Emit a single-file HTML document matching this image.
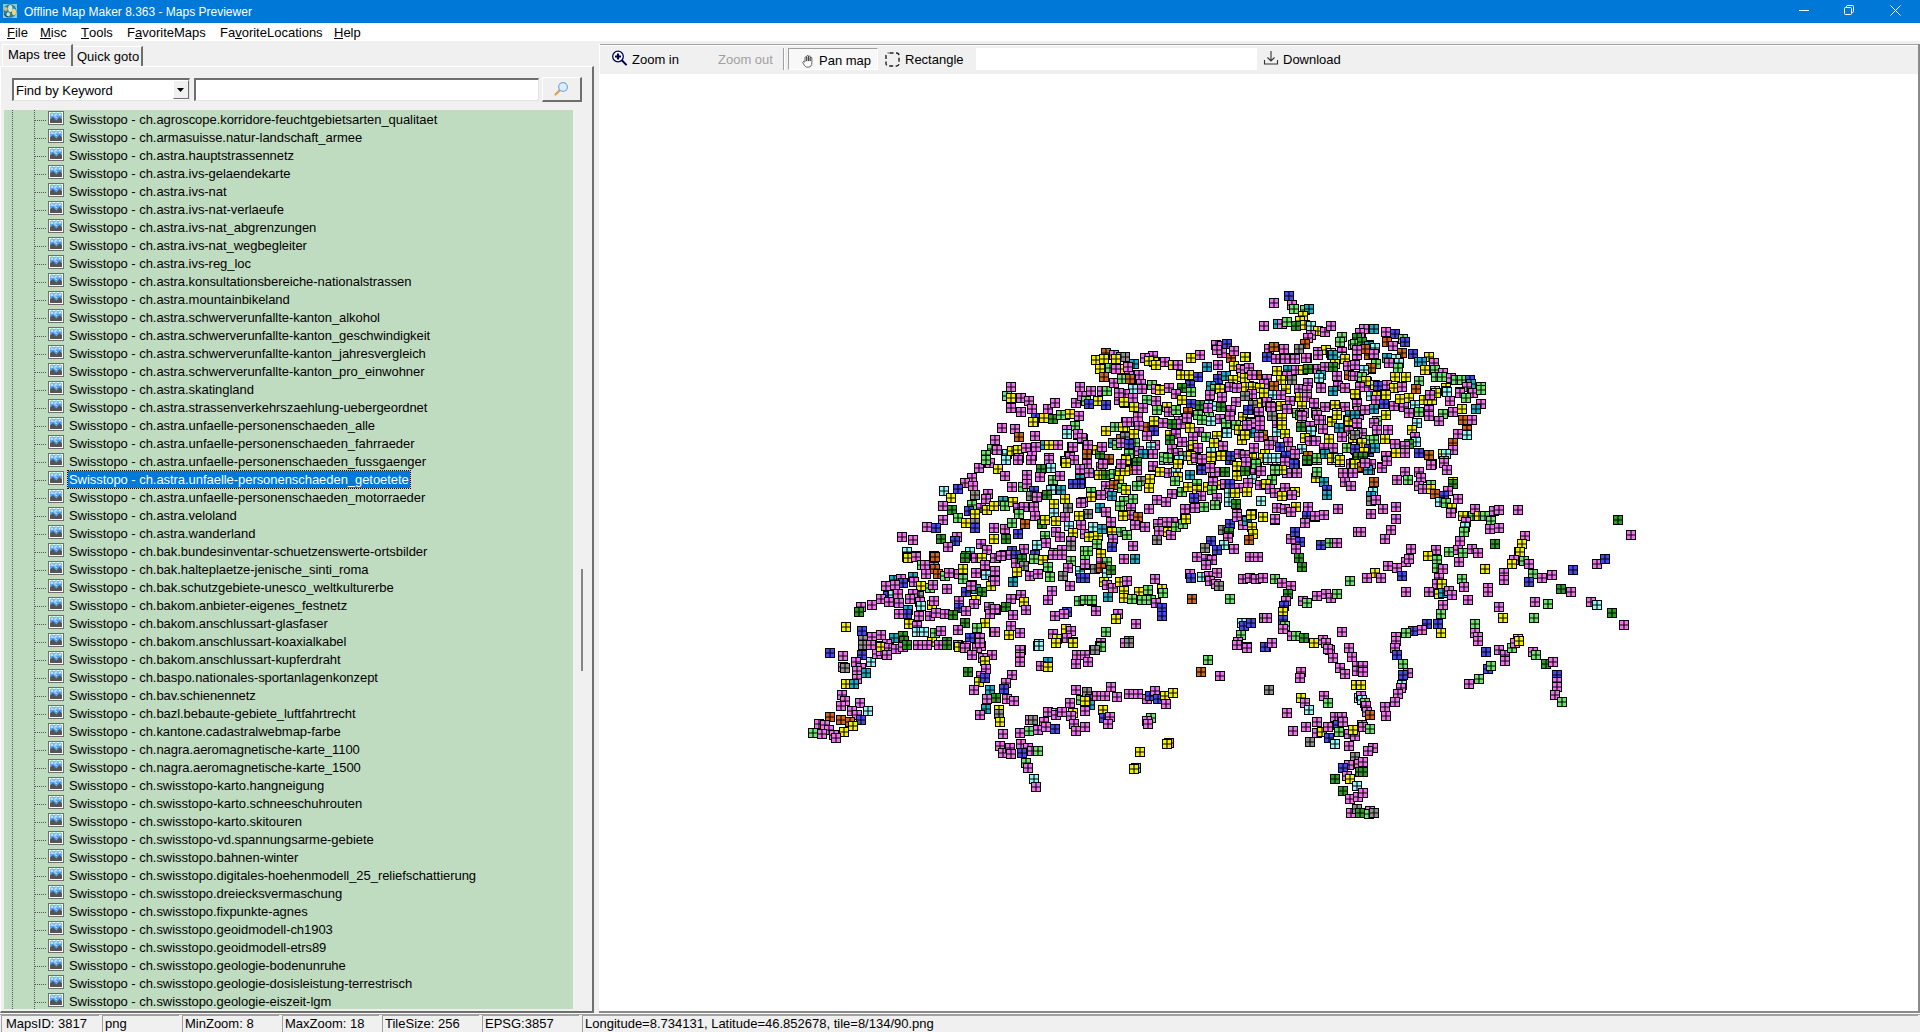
<!DOCTYPE html>
<html><head><meta charset="utf-8"><style>
*{margin:0;padding:0;box-sizing:border-box}
html,body{width:1920px;height:1032px;overflow:hidden;background:#f0f0f0;font-family:"Liberation Sans",sans-serif;font-size:13px;color:#000}
.abs{position:absolute}
#title{position:absolute;left:0;top:0;width:1920px;height:23px;background:#0078d7;color:#fff;font-size:12px}
#title .t{position:absolute;left:24px;top:5px;white-space:nowrap}
#menu{position:absolute;left:0;top:23px;width:1920px;height:18px;background:#fff}
#menu span{position:absolute;top:2px;white-space:nowrap}
u{text-decoration:none;border-bottom:1px solid #000;display:inline-block;line-height:11px}
.tree{position:absolute;left:4px;top:110px;width:569px;height:899px;background:#c0dcc0;overflow:hidden}
.row{position:absolute;left:-4px;width:600px;height:18px}
.hd{position:absolute;left:35px;top:10px;width:12px;height:1px;background:repeating-linear-gradient(90deg,#555 0 1px,transparent 1px 2px)}
.lbl{position:absolute;left:69px;top:1px;white-space:nowrap;line-height:16px;padding:1px 0 0 0;letter-spacing:-0.05px}
.sel{background:#0078d7;color:#fff;outline:1px dotted #000;left:68px;padding-left:1px;padding-right:1px}
.vd{position:absolute;top:0;width:1px;height:901px;background:repeating-linear-gradient(180deg,#555 0 1px,transparent 1px 2px)}
.sb span{position:absolute;top:0;height:17px;border-left:1px solid #a0a0a0;border-top:1px solid #a0a0a0;white-space:nowrap;padding-left:2px;line-height:16px}
.tb{position:absolute;top:52px;white-space:nowrap}
</style></head><body>
<div id="title"><svg class="abs" style="left:3px;top:4px" width="14" height="14" viewBox="0 0 14 14"><rect width="14" height="14" fill="#84cdea"/><ellipse cx="7" cy="7" rx="6.5" ry="6.8" fill="#2f7f9a"/><ellipse cx="7.3" cy="4.5" rx="2.2" ry="3.5" fill="#cfe6d8"/><ellipse cx="2.8" cy="5" rx="1.9" ry="2" fill="#e9b66a"/><ellipse cx="11" cy="8" rx="2" ry="3.2" fill="#f2d577"/><ellipse cx="5.3" cy="10.3" rx="1.7" ry="2" fill="#dfe3a6"/><path d="M1 10 Q3 13 5 13" stroke="#1d4c5c" stroke-width="1.2" fill="none"/></svg><span class="t">Offline Map Maker 8.363 - Maps Previewer</span>
<svg class="abs" style="left:1799px;top:10px" width="11" height="2"><rect width="10" height="1" fill="#fff"/></svg>
<svg class="abs" style="left:1844px;top:5px" width="11" height="11" viewBox="0 0 11 11"><rect x="0.5" y="2.5" width="7" height="7" rx="1" fill="none" stroke="#fff"/><path d="M2.5 2.5 V1.5 a1 1 0 0 1 1 -1 H8.5 a1 1 0 0 1 1 1 V6.5 a1 1 0 0 1 -1 1 H7.5" fill="none" stroke="#fff"/></svg>
<svg class="abs" style="left:1890px;top:5px" width="12" height="12" viewBox="0 0 12 12"><path d="M0.5 0.5 L10.5 10.5 M10.5 0.5 L0.5 10.5" stroke="#fff" stroke-width="1"/></svg>
</div>
<div id="menu">
<span style="left:7px"><u>F</u>ile</span>
<span style="left:40px"><u>M</u>isc</span>
<span style="left:81px"><u>T</u>ools</span>
<span style="left:127px">F<u>a</u>voriteMaps</span>
<span style="left:220px">Fa<u>v</u>oriteLocations</span>
<span style="left:334px"><u>H</u>elp</span>
</div>

<!-- left panel -->
<div class="abs" style="left:0;top:42px;width:600px;height:972px;background:#f0f0f0"></div>
<!-- tabs -->
<div class="abs" style="left:2px;top:44px;width:71px;height:23px;background:#f0f0f0;border-top:1px solid #fff;border-left:1px solid #fff;border-right:2px solid #6e6e6e"></div>
<span class="abs" style="left:8px;top:47px;white-space:nowrap">Maps tree</span>
<div class="abs" style="left:73px;top:46px;width:70px;height:21px;border-top:1px solid #fff;border-right:2px solid #6e6e6e"></div>
<span class="abs" style="left:77px;top:49px;white-space:nowrap">Quick goto</span>
<!-- panel frame -->
<div class="abs" style="left:0px;top:66px;width:594px;height:947px;border-left:1px solid #fff;border-top:1px solid #fff;border-right:2px solid #6e6e6e;border-bottom:2px solid #6e6e6e"></div>
<!-- combobox -->
<div class="abs" style="left:12px;top:78px;width:178px;height:23px;background:#fff;border-top:2px solid #6e6e6e;border-left:2px solid #6e6e6e;border-bottom:1px solid #e3e3e3;border-right:1px solid #e3e3e3"></div>
<span class="abs" style="left:16px;top:83px;white-space:nowrap">Find by Keyword</span>
<div class="abs" style="left:173px;top:80px;width:16px;height:19px;background:#f0f0f0;border-right:1px solid #6e6e6e;border-bottom:1px solid #6e6e6e;border-top:1px solid #fff;border-left:1px solid #fff"></div>
<svg class="abs" style="left:177px;top:88px" width="8" height="5"><path d="M0 0 H7 L3.5 4Z" fill="#000"/></svg>
<!-- text field -->
<div class="abs" style="left:194px;top:78px;width:345px;height:23px;background:#fff;border-top:2px solid #6e6e6e;border-left:2px solid #6e6e6e;border-bottom:1px solid #e3e3e3;border-right:1px solid #e3e3e3"></div>
<!-- search button -->
<div class="abs" style="left:542px;top:77px;width:40px;height:25px;background:#f0f0f0;border-top:1px solid #fff;border-left:1px solid #fff;border-right:2px solid #6e6e6e;border-bottom:2px solid #6e6e6e"></div>
<svg class="abs" style="left:553px;top:81px" width="16" height="16" viewBox="0 0 16 16"><path d="M7 9 L2.5 13.5" stroke="#e0a060" stroke-width="2.4" stroke-linecap="round"/><circle cx="10" cy="6" r="4.4" fill="#d6f0ff" stroke="#86a8d4" stroke-width="1.3"/></svg>

<!-- tree -->
<div class="tree">
<div class="vd" style="left:8px"></div>
<div class="vd" style="left:30px"></div>
<div class="row" style="top:0px"><svg width="16" height="14" viewBox="0 0 16 14" style="position:absolute;left:48px;top:1px"><rect x="0.5" y="0.5" width="15" height="13" fill="#fff" stroke="#6e6e6e"/><rect x="2" y="2" width="12" height="10" fill="#5aa2e6"/><rect x="2" y="2" width="12" height="3" fill="#7dbcf0"/><path d="M2 12 L2 8.5 L5 6 L8.5 9.5 L11.5 6 L14 8.5 L14 12 Z" fill="#555"/><rect x="3" y="1" width="2" height="1" fill="#9ee"/><rect x="7" y="1" width="2" height="1" fill="#9ee"/><rect x="11" y="1" width="2" height="1" fill="#9ee"/><path d="M9 3.3 a1.6 1.6 0 1 0 0 3" stroke="#e8f6ff" fill="none" stroke-width="0.9"/><path d="M4 3 V5 M3 4 H5 M12 2.5 V4.5 M11 3.5 H13" stroke="#e8f6ff" stroke-width="0.7"/></svg><div class="hd"></div><span class="lbl">Swisstopo - ch.agroscope.korridore-feuchtgebietsarten_qualitaet</span></div>
<div class="row" style="top:18px"><svg width="16" height="14" viewBox="0 0 16 14" style="position:absolute;left:48px;top:1px"><rect x="0.5" y="0.5" width="15" height="13" fill="#fff" stroke="#6e6e6e"/><rect x="2" y="2" width="12" height="10" fill="#5aa2e6"/><rect x="2" y="2" width="12" height="3" fill="#7dbcf0"/><path d="M2 12 L2 8.5 L5 6 L8.5 9.5 L11.5 6 L14 8.5 L14 12 Z" fill="#555"/><rect x="3" y="1" width="2" height="1" fill="#9ee"/><rect x="7" y="1" width="2" height="1" fill="#9ee"/><rect x="11" y="1" width="2" height="1" fill="#9ee"/><path d="M9 3.3 a1.6 1.6 0 1 0 0 3" stroke="#e8f6ff" fill="none" stroke-width="0.9"/><path d="M4 3 V5 M3 4 H5 M12 2.5 V4.5 M11 3.5 H13" stroke="#e8f6ff" stroke-width="0.7"/></svg><div class="hd"></div><span class="lbl">Swisstopo - ch.armasuisse.natur-landschaft_armee</span></div>
<div class="row" style="top:36px"><svg width="16" height="14" viewBox="0 0 16 14" style="position:absolute;left:48px;top:1px"><rect x="0.5" y="0.5" width="15" height="13" fill="#fff" stroke="#6e6e6e"/><rect x="2" y="2" width="12" height="10" fill="#5aa2e6"/><rect x="2" y="2" width="12" height="3" fill="#7dbcf0"/><path d="M2 12 L2 8.5 L5 6 L8.5 9.5 L11.5 6 L14 8.5 L14 12 Z" fill="#555"/><rect x="3" y="1" width="2" height="1" fill="#9ee"/><rect x="7" y="1" width="2" height="1" fill="#9ee"/><rect x="11" y="1" width="2" height="1" fill="#9ee"/><path d="M9 3.3 a1.6 1.6 0 1 0 0 3" stroke="#e8f6ff" fill="none" stroke-width="0.9"/><path d="M4 3 V5 M3 4 H5 M12 2.5 V4.5 M11 3.5 H13" stroke="#e8f6ff" stroke-width="0.7"/></svg><div class="hd"></div><span class="lbl">Swisstopo - ch.astra.hauptstrassennetz</span></div>
<div class="row" style="top:54px"><svg width="16" height="14" viewBox="0 0 16 14" style="position:absolute;left:48px;top:1px"><rect x="0.5" y="0.5" width="15" height="13" fill="#fff" stroke="#6e6e6e"/><rect x="2" y="2" width="12" height="10" fill="#5aa2e6"/><rect x="2" y="2" width="12" height="3" fill="#7dbcf0"/><path d="M2 12 L2 8.5 L5 6 L8.5 9.5 L11.5 6 L14 8.5 L14 12 Z" fill="#555"/><rect x="3" y="1" width="2" height="1" fill="#9ee"/><rect x="7" y="1" width="2" height="1" fill="#9ee"/><rect x="11" y="1" width="2" height="1" fill="#9ee"/><path d="M9 3.3 a1.6 1.6 0 1 0 0 3" stroke="#e8f6ff" fill="none" stroke-width="0.9"/><path d="M4 3 V5 M3 4 H5 M12 2.5 V4.5 M11 3.5 H13" stroke="#e8f6ff" stroke-width="0.7"/></svg><div class="hd"></div><span class="lbl">Swisstopo - ch.astra.ivs-gelaendekarte</span></div>
<div class="row" style="top:72px"><svg width="16" height="14" viewBox="0 0 16 14" style="position:absolute;left:48px;top:1px"><rect x="0.5" y="0.5" width="15" height="13" fill="#fff" stroke="#6e6e6e"/><rect x="2" y="2" width="12" height="10" fill="#5aa2e6"/><rect x="2" y="2" width="12" height="3" fill="#7dbcf0"/><path d="M2 12 L2 8.5 L5 6 L8.5 9.5 L11.5 6 L14 8.5 L14 12 Z" fill="#555"/><rect x="3" y="1" width="2" height="1" fill="#9ee"/><rect x="7" y="1" width="2" height="1" fill="#9ee"/><rect x="11" y="1" width="2" height="1" fill="#9ee"/><path d="M9 3.3 a1.6 1.6 0 1 0 0 3" stroke="#e8f6ff" fill="none" stroke-width="0.9"/><path d="M4 3 V5 M3 4 H5 M12 2.5 V4.5 M11 3.5 H13" stroke="#e8f6ff" stroke-width="0.7"/></svg><div class="hd"></div><span class="lbl">Swisstopo - ch.astra.ivs-nat</span></div>
<div class="row" style="top:90px"><svg width="16" height="14" viewBox="0 0 16 14" style="position:absolute;left:48px;top:1px"><rect x="0.5" y="0.5" width="15" height="13" fill="#fff" stroke="#6e6e6e"/><rect x="2" y="2" width="12" height="10" fill="#5aa2e6"/><rect x="2" y="2" width="12" height="3" fill="#7dbcf0"/><path d="M2 12 L2 8.5 L5 6 L8.5 9.5 L11.5 6 L14 8.5 L14 12 Z" fill="#555"/><rect x="3" y="1" width="2" height="1" fill="#9ee"/><rect x="7" y="1" width="2" height="1" fill="#9ee"/><rect x="11" y="1" width="2" height="1" fill="#9ee"/><path d="M9 3.3 a1.6 1.6 0 1 0 0 3" stroke="#e8f6ff" fill="none" stroke-width="0.9"/><path d="M4 3 V5 M3 4 H5 M12 2.5 V4.5 M11 3.5 H13" stroke="#e8f6ff" stroke-width="0.7"/></svg><div class="hd"></div><span class="lbl">Swisstopo - ch.astra.ivs-nat-verlaeufe</span></div>
<div class="row" style="top:108px"><svg width="16" height="14" viewBox="0 0 16 14" style="position:absolute;left:48px;top:1px"><rect x="0.5" y="0.5" width="15" height="13" fill="#fff" stroke="#6e6e6e"/><rect x="2" y="2" width="12" height="10" fill="#5aa2e6"/><rect x="2" y="2" width="12" height="3" fill="#7dbcf0"/><path d="M2 12 L2 8.5 L5 6 L8.5 9.5 L11.5 6 L14 8.5 L14 12 Z" fill="#555"/><rect x="3" y="1" width="2" height="1" fill="#9ee"/><rect x="7" y="1" width="2" height="1" fill="#9ee"/><rect x="11" y="1" width="2" height="1" fill="#9ee"/><path d="M9 3.3 a1.6 1.6 0 1 0 0 3" stroke="#e8f6ff" fill="none" stroke-width="0.9"/><path d="M4 3 V5 M3 4 H5 M12 2.5 V4.5 M11 3.5 H13" stroke="#e8f6ff" stroke-width="0.7"/></svg><div class="hd"></div><span class="lbl">Swisstopo - ch.astra.ivs-nat_abgrenzungen</span></div>
<div class="row" style="top:126px"><svg width="16" height="14" viewBox="0 0 16 14" style="position:absolute;left:48px;top:1px"><rect x="0.5" y="0.5" width="15" height="13" fill="#fff" stroke="#6e6e6e"/><rect x="2" y="2" width="12" height="10" fill="#5aa2e6"/><rect x="2" y="2" width="12" height="3" fill="#7dbcf0"/><path d="M2 12 L2 8.5 L5 6 L8.5 9.5 L11.5 6 L14 8.5 L14 12 Z" fill="#555"/><rect x="3" y="1" width="2" height="1" fill="#9ee"/><rect x="7" y="1" width="2" height="1" fill="#9ee"/><rect x="11" y="1" width="2" height="1" fill="#9ee"/><path d="M9 3.3 a1.6 1.6 0 1 0 0 3" stroke="#e8f6ff" fill="none" stroke-width="0.9"/><path d="M4 3 V5 M3 4 H5 M12 2.5 V4.5 M11 3.5 H13" stroke="#e8f6ff" stroke-width="0.7"/></svg><div class="hd"></div><span class="lbl">Swisstopo - ch.astra.ivs-nat_wegbegleiter</span></div>
<div class="row" style="top:144px"><svg width="16" height="14" viewBox="0 0 16 14" style="position:absolute;left:48px;top:1px"><rect x="0.5" y="0.5" width="15" height="13" fill="#fff" stroke="#6e6e6e"/><rect x="2" y="2" width="12" height="10" fill="#5aa2e6"/><rect x="2" y="2" width="12" height="3" fill="#7dbcf0"/><path d="M2 12 L2 8.5 L5 6 L8.5 9.5 L11.5 6 L14 8.5 L14 12 Z" fill="#555"/><rect x="3" y="1" width="2" height="1" fill="#9ee"/><rect x="7" y="1" width="2" height="1" fill="#9ee"/><rect x="11" y="1" width="2" height="1" fill="#9ee"/><path d="M9 3.3 a1.6 1.6 0 1 0 0 3" stroke="#e8f6ff" fill="none" stroke-width="0.9"/><path d="M4 3 V5 M3 4 H5 M12 2.5 V4.5 M11 3.5 H13" stroke="#e8f6ff" stroke-width="0.7"/></svg><div class="hd"></div><span class="lbl">Swisstopo - ch.astra.ivs-reg_loc</span></div>
<div class="row" style="top:162px"><svg width="16" height="14" viewBox="0 0 16 14" style="position:absolute;left:48px;top:1px"><rect x="0.5" y="0.5" width="15" height="13" fill="#fff" stroke="#6e6e6e"/><rect x="2" y="2" width="12" height="10" fill="#5aa2e6"/><rect x="2" y="2" width="12" height="3" fill="#7dbcf0"/><path d="M2 12 L2 8.5 L5 6 L8.5 9.5 L11.5 6 L14 8.5 L14 12 Z" fill="#555"/><rect x="3" y="1" width="2" height="1" fill="#9ee"/><rect x="7" y="1" width="2" height="1" fill="#9ee"/><rect x="11" y="1" width="2" height="1" fill="#9ee"/><path d="M9 3.3 a1.6 1.6 0 1 0 0 3" stroke="#e8f6ff" fill="none" stroke-width="0.9"/><path d="M4 3 V5 M3 4 H5 M12 2.5 V4.5 M11 3.5 H13" stroke="#e8f6ff" stroke-width="0.7"/></svg><div class="hd"></div><span class="lbl">Swisstopo - ch.astra.konsultationsbereiche-nationalstrassen</span></div>
<div class="row" style="top:180px"><svg width="16" height="14" viewBox="0 0 16 14" style="position:absolute;left:48px;top:1px"><rect x="0.5" y="0.5" width="15" height="13" fill="#fff" stroke="#6e6e6e"/><rect x="2" y="2" width="12" height="10" fill="#5aa2e6"/><rect x="2" y="2" width="12" height="3" fill="#7dbcf0"/><path d="M2 12 L2 8.5 L5 6 L8.5 9.5 L11.5 6 L14 8.5 L14 12 Z" fill="#555"/><rect x="3" y="1" width="2" height="1" fill="#9ee"/><rect x="7" y="1" width="2" height="1" fill="#9ee"/><rect x="11" y="1" width="2" height="1" fill="#9ee"/><path d="M9 3.3 a1.6 1.6 0 1 0 0 3" stroke="#e8f6ff" fill="none" stroke-width="0.9"/><path d="M4 3 V5 M3 4 H5 M12 2.5 V4.5 M11 3.5 H13" stroke="#e8f6ff" stroke-width="0.7"/></svg><div class="hd"></div><span class="lbl">Swisstopo - ch.astra.mountainbikeland</span></div>
<div class="row" style="top:198px"><svg width="16" height="14" viewBox="0 0 16 14" style="position:absolute;left:48px;top:1px"><rect x="0.5" y="0.5" width="15" height="13" fill="#fff" stroke="#6e6e6e"/><rect x="2" y="2" width="12" height="10" fill="#5aa2e6"/><rect x="2" y="2" width="12" height="3" fill="#7dbcf0"/><path d="M2 12 L2 8.5 L5 6 L8.5 9.5 L11.5 6 L14 8.5 L14 12 Z" fill="#555"/><rect x="3" y="1" width="2" height="1" fill="#9ee"/><rect x="7" y="1" width="2" height="1" fill="#9ee"/><rect x="11" y="1" width="2" height="1" fill="#9ee"/><path d="M9 3.3 a1.6 1.6 0 1 0 0 3" stroke="#e8f6ff" fill="none" stroke-width="0.9"/><path d="M4 3 V5 M3 4 H5 M12 2.5 V4.5 M11 3.5 H13" stroke="#e8f6ff" stroke-width="0.7"/></svg><div class="hd"></div><span class="lbl">Swisstopo - ch.astra.schwerverunfallte-kanton_alkohol</span></div>
<div class="row" style="top:216px"><svg width="16" height="14" viewBox="0 0 16 14" style="position:absolute;left:48px;top:1px"><rect x="0.5" y="0.5" width="15" height="13" fill="#fff" stroke="#6e6e6e"/><rect x="2" y="2" width="12" height="10" fill="#5aa2e6"/><rect x="2" y="2" width="12" height="3" fill="#7dbcf0"/><path d="M2 12 L2 8.5 L5 6 L8.5 9.5 L11.5 6 L14 8.5 L14 12 Z" fill="#555"/><rect x="3" y="1" width="2" height="1" fill="#9ee"/><rect x="7" y="1" width="2" height="1" fill="#9ee"/><rect x="11" y="1" width="2" height="1" fill="#9ee"/><path d="M9 3.3 a1.6 1.6 0 1 0 0 3" stroke="#e8f6ff" fill="none" stroke-width="0.9"/><path d="M4 3 V5 M3 4 H5 M12 2.5 V4.5 M11 3.5 H13" stroke="#e8f6ff" stroke-width="0.7"/></svg><div class="hd"></div><span class="lbl">Swisstopo - ch.astra.schwerverunfallte-kanton_geschwindigkeit</span></div>
<div class="row" style="top:234px"><svg width="16" height="14" viewBox="0 0 16 14" style="position:absolute;left:48px;top:1px"><rect x="0.5" y="0.5" width="15" height="13" fill="#fff" stroke="#6e6e6e"/><rect x="2" y="2" width="12" height="10" fill="#5aa2e6"/><rect x="2" y="2" width="12" height="3" fill="#7dbcf0"/><path d="M2 12 L2 8.5 L5 6 L8.5 9.5 L11.5 6 L14 8.5 L14 12 Z" fill="#555"/><rect x="3" y="1" width="2" height="1" fill="#9ee"/><rect x="7" y="1" width="2" height="1" fill="#9ee"/><rect x="11" y="1" width="2" height="1" fill="#9ee"/><path d="M9 3.3 a1.6 1.6 0 1 0 0 3" stroke="#e8f6ff" fill="none" stroke-width="0.9"/><path d="M4 3 V5 M3 4 H5 M12 2.5 V4.5 M11 3.5 H13" stroke="#e8f6ff" stroke-width="0.7"/></svg><div class="hd"></div><span class="lbl">Swisstopo - ch.astra.schwerverunfallte-kanton_jahresvergleich</span></div>
<div class="row" style="top:252px"><svg width="16" height="14" viewBox="0 0 16 14" style="position:absolute;left:48px;top:1px"><rect x="0.5" y="0.5" width="15" height="13" fill="#fff" stroke="#6e6e6e"/><rect x="2" y="2" width="12" height="10" fill="#5aa2e6"/><rect x="2" y="2" width="12" height="3" fill="#7dbcf0"/><path d="M2 12 L2 8.5 L5 6 L8.5 9.5 L11.5 6 L14 8.5 L14 12 Z" fill="#555"/><rect x="3" y="1" width="2" height="1" fill="#9ee"/><rect x="7" y="1" width="2" height="1" fill="#9ee"/><rect x="11" y="1" width="2" height="1" fill="#9ee"/><path d="M9 3.3 a1.6 1.6 0 1 0 0 3" stroke="#e8f6ff" fill="none" stroke-width="0.9"/><path d="M4 3 V5 M3 4 H5 M12 2.5 V4.5 M11 3.5 H13" stroke="#e8f6ff" stroke-width="0.7"/></svg><div class="hd"></div><span class="lbl">Swisstopo - ch.astra.schwerverunfallte-kanton_pro_einwohner</span></div>
<div class="row" style="top:270px"><svg width="16" height="14" viewBox="0 0 16 14" style="position:absolute;left:48px;top:1px"><rect x="0.5" y="0.5" width="15" height="13" fill="#fff" stroke="#6e6e6e"/><rect x="2" y="2" width="12" height="10" fill="#5aa2e6"/><rect x="2" y="2" width="12" height="3" fill="#7dbcf0"/><path d="M2 12 L2 8.5 L5 6 L8.5 9.5 L11.5 6 L14 8.5 L14 12 Z" fill="#555"/><rect x="3" y="1" width="2" height="1" fill="#9ee"/><rect x="7" y="1" width="2" height="1" fill="#9ee"/><rect x="11" y="1" width="2" height="1" fill="#9ee"/><path d="M9 3.3 a1.6 1.6 0 1 0 0 3" stroke="#e8f6ff" fill="none" stroke-width="0.9"/><path d="M4 3 V5 M3 4 H5 M12 2.5 V4.5 M11 3.5 H13" stroke="#e8f6ff" stroke-width="0.7"/></svg><div class="hd"></div><span class="lbl">Swisstopo - ch.astra.skatingland</span></div>
<div class="row" style="top:288px"><svg width="16" height="14" viewBox="0 0 16 14" style="position:absolute;left:48px;top:1px"><rect x="0.5" y="0.5" width="15" height="13" fill="#fff" stroke="#6e6e6e"/><rect x="2" y="2" width="12" height="10" fill="#5aa2e6"/><rect x="2" y="2" width="12" height="3" fill="#7dbcf0"/><path d="M2 12 L2 8.5 L5 6 L8.5 9.5 L11.5 6 L14 8.5 L14 12 Z" fill="#555"/><rect x="3" y="1" width="2" height="1" fill="#9ee"/><rect x="7" y="1" width="2" height="1" fill="#9ee"/><rect x="11" y="1" width="2" height="1" fill="#9ee"/><path d="M9 3.3 a1.6 1.6 0 1 0 0 3" stroke="#e8f6ff" fill="none" stroke-width="0.9"/><path d="M4 3 V5 M3 4 H5 M12 2.5 V4.5 M11 3.5 H13" stroke="#e8f6ff" stroke-width="0.7"/></svg><div class="hd"></div><span class="lbl">Swisstopo - ch.astra.strassenverkehrszaehlung-uebergeordnet</span></div>
<div class="row" style="top:306px"><svg width="16" height="14" viewBox="0 0 16 14" style="position:absolute;left:48px;top:1px"><rect x="0.5" y="0.5" width="15" height="13" fill="#fff" stroke="#6e6e6e"/><rect x="2" y="2" width="12" height="10" fill="#5aa2e6"/><rect x="2" y="2" width="12" height="3" fill="#7dbcf0"/><path d="M2 12 L2 8.5 L5 6 L8.5 9.5 L11.5 6 L14 8.5 L14 12 Z" fill="#555"/><rect x="3" y="1" width="2" height="1" fill="#9ee"/><rect x="7" y="1" width="2" height="1" fill="#9ee"/><rect x="11" y="1" width="2" height="1" fill="#9ee"/><path d="M9 3.3 a1.6 1.6 0 1 0 0 3" stroke="#e8f6ff" fill="none" stroke-width="0.9"/><path d="M4 3 V5 M3 4 H5 M12 2.5 V4.5 M11 3.5 H13" stroke="#e8f6ff" stroke-width="0.7"/></svg><div class="hd"></div><span class="lbl">Swisstopo - ch.astra.unfaelle-personenschaeden_alle</span></div>
<div class="row" style="top:324px"><svg width="16" height="14" viewBox="0 0 16 14" style="position:absolute;left:48px;top:1px"><rect x="0.5" y="0.5" width="15" height="13" fill="#fff" stroke="#6e6e6e"/><rect x="2" y="2" width="12" height="10" fill="#5aa2e6"/><rect x="2" y="2" width="12" height="3" fill="#7dbcf0"/><path d="M2 12 L2 8.5 L5 6 L8.5 9.5 L11.5 6 L14 8.5 L14 12 Z" fill="#555"/><rect x="3" y="1" width="2" height="1" fill="#9ee"/><rect x="7" y="1" width="2" height="1" fill="#9ee"/><rect x="11" y="1" width="2" height="1" fill="#9ee"/><path d="M9 3.3 a1.6 1.6 0 1 0 0 3" stroke="#e8f6ff" fill="none" stroke-width="0.9"/><path d="M4 3 V5 M3 4 H5 M12 2.5 V4.5 M11 3.5 H13" stroke="#e8f6ff" stroke-width="0.7"/></svg><div class="hd"></div><span class="lbl">Swisstopo - ch.astra.unfaelle-personenschaeden_fahrraeder</span></div>
<div class="row" style="top:342px"><svg width="16" height="14" viewBox="0 0 16 14" style="position:absolute;left:48px;top:1px"><rect x="0.5" y="0.5" width="15" height="13" fill="#fff" stroke="#6e6e6e"/><rect x="2" y="2" width="12" height="10" fill="#5aa2e6"/><rect x="2" y="2" width="12" height="3" fill="#7dbcf0"/><path d="M2 12 L2 8.5 L5 6 L8.5 9.5 L11.5 6 L14 8.5 L14 12 Z" fill="#555"/><rect x="3" y="1" width="2" height="1" fill="#9ee"/><rect x="7" y="1" width="2" height="1" fill="#9ee"/><rect x="11" y="1" width="2" height="1" fill="#9ee"/><path d="M9 3.3 a1.6 1.6 0 1 0 0 3" stroke="#e8f6ff" fill="none" stroke-width="0.9"/><path d="M4 3 V5 M3 4 H5 M12 2.5 V4.5 M11 3.5 H13" stroke="#e8f6ff" stroke-width="0.7"/></svg><div class="hd"></div><span class="lbl">Swisstopo - ch.astra.unfaelle-personenschaeden_fussgaenger</span></div>
<div class="row" style="top:360px"><svg width="16" height="14" viewBox="0 0 16 14" style="position:absolute;left:48px;top:1px"><rect x="0.5" y="0.5" width="15" height="13" fill="#fff" stroke="#6e6e6e"/><rect x="2" y="2" width="12" height="10" fill="#5aa2e6"/><rect x="2" y="2" width="12" height="3" fill="#7dbcf0"/><path d="M2 12 L2 8.5 L5 6 L8.5 9.5 L11.5 6 L14 8.5 L14 12 Z" fill="#555"/><rect x="3" y="1" width="2" height="1" fill="#9ee"/><rect x="7" y="1" width="2" height="1" fill="#9ee"/><rect x="11" y="1" width="2" height="1" fill="#9ee"/><path d="M9 3.3 a1.6 1.6 0 1 0 0 3" stroke="#e8f6ff" fill="none" stroke-width="0.9"/><path d="M4 3 V5 M3 4 H5 M12 2.5 V4.5 M11 3.5 H13" stroke="#e8f6ff" stroke-width="0.7"/></svg><div class="hd"></div><span class="lbl sel">Swisstopo - ch.astra.unfaelle-personenschaeden_getoetete</span></div>
<div class="row" style="top:378px"><svg width="16" height="14" viewBox="0 0 16 14" style="position:absolute;left:48px;top:1px"><rect x="0.5" y="0.5" width="15" height="13" fill="#fff" stroke="#6e6e6e"/><rect x="2" y="2" width="12" height="10" fill="#5aa2e6"/><rect x="2" y="2" width="12" height="3" fill="#7dbcf0"/><path d="M2 12 L2 8.5 L5 6 L8.5 9.5 L11.5 6 L14 8.5 L14 12 Z" fill="#555"/><rect x="3" y="1" width="2" height="1" fill="#9ee"/><rect x="7" y="1" width="2" height="1" fill="#9ee"/><rect x="11" y="1" width="2" height="1" fill="#9ee"/><path d="M9 3.3 a1.6 1.6 0 1 0 0 3" stroke="#e8f6ff" fill="none" stroke-width="0.9"/><path d="M4 3 V5 M3 4 H5 M12 2.5 V4.5 M11 3.5 H13" stroke="#e8f6ff" stroke-width="0.7"/></svg><div class="hd"></div><span class="lbl">Swisstopo - ch.astra.unfaelle-personenschaeden_motorraeder</span></div>
<div class="row" style="top:396px"><svg width="16" height="14" viewBox="0 0 16 14" style="position:absolute;left:48px;top:1px"><rect x="0.5" y="0.5" width="15" height="13" fill="#fff" stroke="#6e6e6e"/><rect x="2" y="2" width="12" height="10" fill="#5aa2e6"/><rect x="2" y="2" width="12" height="3" fill="#7dbcf0"/><path d="M2 12 L2 8.5 L5 6 L8.5 9.5 L11.5 6 L14 8.5 L14 12 Z" fill="#555"/><rect x="3" y="1" width="2" height="1" fill="#9ee"/><rect x="7" y="1" width="2" height="1" fill="#9ee"/><rect x="11" y="1" width="2" height="1" fill="#9ee"/><path d="M9 3.3 a1.6 1.6 0 1 0 0 3" stroke="#e8f6ff" fill="none" stroke-width="0.9"/><path d="M4 3 V5 M3 4 H5 M12 2.5 V4.5 M11 3.5 H13" stroke="#e8f6ff" stroke-width="0.7"/></svg><div class="hd"></div><span class="lbl">Swisstopo - ch.astra.veloland</span></div>
<div class="row" style="top:414px"><svg width="16" height="14" viewBox="0 0 16 14" style="position:absolute;left:48px;top:1px"><rect x="0.5" y="0.5" width="15" height="13" fill="#fff" stroke="#6e6e6e"/><rect x="2" y="2" width="12" height="10" fill="#5aa2e6"/><rect x="2" y="2" width="12" height="3" fill="#7dbcf0"/><path d="M2 12 L2 8.5 L5 6 L8.5 9.5 L11.5 6 L14 8.5 L14 12 Z" fill="#555"/><rect x="3" y="1" width="2" height="1" fill="#9ee"/><rect x="7" y="1" width="2" height="1" fill="#9ee"/><rect x="11" y="1" width="2" height="1" fill="#9ee"/><path d="M9 3.3 a1.6 1.6 0 1 0 0 3" stroke="#e8f6ff" fill="none" stroke-width="0.9"/><path d="M4 3 V5 M3 4 H5 M12 2.5 V4.5 M11 3.5 H13" stroke="#e8f6ff" stroke-width="0.7"/></svg><div class="hd"></div><span class="lbl">Swisstopo - ch.astra.wanderland</span></div>
<div class="row" style="top:432px"><svg width="16" height="14" viewBox="0 0 16 14" style="position:absolute;left:48px;top:1px"><rect x="0.5" y="0.5" width="15" height="13" fill="#fff" stroke="#6e6e6e"/><rect x="2" y="2" width="12" height="10" fill="#5aa2e6"/><rect x="2" y="2" width="12" height="3" fill="#7dbcf0"/><path d="M2 12 L2 8.5 L5 6 L8.5 9.5 L11.5 6 L14 8.5 L14 12 Z" fill="#555"/><rect x="3" y="1" width="2" height="1" fill="#9ee"/><rect x="7" y="1" width="2" height="1" fill="#9ee"/><rect x="11" y="1" width="2" height="1" fill="#9ee"/><path d="M9 3.3 a1.6 1.6 0 1 0 0 3" stroke="#e8f6ff" fill="none" stroke-width="0.9"/><path d="M4 3 V5 M3 4 H5 M12 2.5 V4.5 M11 3.5 H13" stroke="#e8f6ff" stroke-width="0.7"/></svg><div class="hd"></div><span class="lbl">Swisstopo - ch.bak.bundesinventar-schuetzenswerte-ortsbilder</span></div>
<div class="row" style="top:450px"><svg width="16" height="14" viewBox="0 0 16 14" style="position:absolute;left:48px;top:1px"><rect x="0.5" y="0.5" width="15" height="13" fill="#fff" stroke="#6e6e6e"/><rect x="2" y="2" width="12" height="10" fill="#5aa2e6"/><rect x="2" y="2" width="12" height="3" fill="#7dbcf0"/><path d="M2 12 L2 8.5 L5 6 L8.5 9.5 L11.5 6 L14 8.5 L14 12 Z" fill="#555"/><rect x="3" y="1" width="2" height="1" fill="#9ee"/><rect x="7" y="1" width="2" height="1" fill="#9ee"/><rect x="11" y="1" width="2" height="1" fill="#9ee"/><path d="M9 3.3 a1.6 1.6 0 1 0 0 3" stroke="#e8f6ff" fill="none" stroke-width="0.9"/><path d="M4 3 V5 M3 4 H5 M12 2.5 V4.5 M11 3.5 H13" stroke="#e8f6ff" stroke-width="0.7"/></svg><div class="hd"></div><span class="lbl">Swisstopo - ch.bak.halteplaetze-jenische_sinti_roma</span></div>
<div class="row" style="top:468px"><svg width="16" height="14" viewBox="0 0 16 14" style="position:absolute;left:48px;top:1px"><rect x="0.5" y="0.5" width="15" height="13" fill="#fff" stroke="#6e6e6e"/><rect x="2" y="2" width="12" height="10" fill="#5aa2e6"/><rect x="2" y="2" width="12" height="3" fill="#7dbcf0"/><path d="M2 12 L2 8.5 L5 6 L8.5 9.5 L11.5 6 L14 8.5 L14 12 Z" fill="#555"/><rect x="3" y="1" width="2" height="1" fill="#9ee"/><rect x="7" y="1" width="2" height="1" fill="#9ee"/><rect x="11" y="1" width="2" height="1" fill="#9ee"/><path d="M9 3.3 a1.6 1.6 0 1 0 0 3" stroke="#e8f6ff" fill="none" stroke-width="0.9"/><path d="M4 3 V5 M3 4 H5 M12 2.5 V4.5 M11 3.5 H13" stroke="#e8f6ff" stroke-width="0.7"/></svg><div class="hd"></div><span class="lbl">Swisstopo - ch.bak.schutzgebiete-unesco_weltkulturerbe</span></div>
<div class="row" style="top:486px"><svg width="16" height="14" viewBox="0 0 16 14" style="position:absolute;left:48px;top:1px"><rect x="0.5" y="0.5" width="15" height="13" fill="#fff" stroke="#6e6e6e"/><rect x="2" y="2" width="12" height="10" fill="#5aa2e6"/><rect x="2" y="2" width="12" height="3" fill="#7dbcf0"/><path d="M2 12 L2 8.5 L5 6 L8.5 9.5 L11.5 6 L14 8.5 L14 12 Z" fill="#555"/><rect x="3" y="1" width="2" height="1" fill="#9ee"/><rect x="7" y="1" width="2" height="1" fill="#9ee"/><rect x="11" y="1" width="2" height="1" fill="#9ee"/><path d="M9 3.3 a1.6 1.6 0 1 0 0 3" stroke="#e8f6ff" fill="none" stroke-width="0.9"/><path d="M4 3 V5 M3 4 H5 M12 2.5 V4.5 M11 3.5 H13" stroke="#e8f6ff" stroke-width="0.7"/></svg><div class="hd"></div><span class="lbl">Swisstopo - ch.bakom.anbieter-eigenes_festnetz</span></div>
<div class="row" style="top:504px"><svg width="16" height="14" viewBox="0 0 16 14" style="position:absolute;left:48px;top:1px"><rect x="0.5" y="0.5" width="15" height="13" fill="#fff" stroke="#6e6e6e"/><rect x="2" y="2" width="12" height="10" fill="#5aa2e6"/><rect x="2" y="2" width="12" height="3" fill="#7dbcf0"/><path d="M2 12 L2 8.5 L5 6 L8.5 9.5 L11.5 6 L14 8.5 L14 12 Z" fill="#555"/><rect x="3" y="1" width="2" height="1" fill="#9ee"/><rect x="7" y="1" width="2" height="1" fill="#9ee"/><rect x="11" y="1" width="2" height="1" fill="#9ee"/><path d="M9 3.3 a1.6 1.6 0 1 0 0 3" stroke="#e8f6ff" fill="none" stroke-width="0.9"/><path d="M4 3 V5 M3 4 H5 M12 2.5 V4.5 M11 3.5 H13" stroke="#e8f6ff" stroke-width="0.7"/></svg><div class="hd"></div><span class="lbl">Swisstopo - ch.bakom.anschlussart-glasfaser</span></div>
<div class="row" style="top:522px"><svg width="16" height="14" viewBox="0 0 16 14" style="position:absolute;left:48px;top:1px"><rect x="0.5" y="0.5" width="15" height="13" fill="#fff" stroke="#6e6e6e"/><rect x="2" y="2" width="12" height="10" fill="#5aa2e6"/><rect x="2" y="2" width="12" height="3" fill="#7dbcf0"/><path d="M2 12 L2 8.5 L5 6 L8.5 9.5 L11.5 6 L14 8.5 L14 12 Z" fill="#555"/><rect x="3" y="1" width="2" height="1" fill="#9ee"/><rect x="7" y="1" width="2" height="1" fill="#9ee"/><rect x="11" y="1" width="2" height="1" fill="#9ee"/><path d="M9 3.3 a1.6 1.6 0 1 0 0 3" stroke="#e8f6ff" fill="none" stroke-width="0.9"/><path d="M4 3 V5 M3 4 H5 M12 2.5 V4.5 M11 3.5 H13" stroke="#e8f6ff" stroke-width="0.7"/></svg><div class="hd"></div><span class="lbl">Swisstopo - ch.bakom.anschlussart-koaxialkabel</span></div>
<div class="row" style="top:540px"><svg width="16" height="14" viewBox="0 0 16 14" style="position:absolute;left:48px;top:1px"><rect x="0.5" y="0.5" width="15" height="13" fill="#fff" stroke="#6e6e6e"/><rect x="2" y="2" width="12" height="10" fill="#5aa2e6"/><rect x="2" y="2" width="12" height="3" fill="#7dbcf0"/><path d="M2 12 L2 8.5 L5 6 L8.5 9.5 L11.5 6 L14 8.5 L14 12 Z" fill="#555"/><rect x="3" y="1" width="2" height="1" fill="#9ee"/><rect x="7" y="1" width="2" height="1" fill="#9ee"/><rect x="11" y="1" width="2" height="1" fill="#9ee"/><path d="M9 3.3 a1.6 1.6 0 1 0 0 3" stroke="#e8f6ff" fill="none" stroke-width="0.9"/><path d="M4 3 V5 M3 4 H5 M12 2.5 V4.5 M11 3.5 H13" stroke="#e8f6ff" stroke-width="0.7"/></svg><div class="hd"></div><span class="lbl">Swisstopo - ch.bakom.anschlussart-kupferdraht</span></div>
<div class="row" style="top:558px"><svg width="16" height="14" viewBox="0 0 16 14" style="position:absolute;left:48px;top:1px"><rect x="0.5" y="0.5" width="15" height="13" fill="#fff" stroke="#6e6e6e"/><rect x="2" y="2" width="12" height="10" fill="#5aa2e6"/><rect x="2" y="2" width="12" height="3" fill="#7dbcf0"/><path d="M2 12 L2 8.5 L5 6 L8.5 9.5 L11.5 6 L14 8.5 L14 12 Z" fill="#555"/><rect x="3" y="1" width="2" height="1" fill="#9ee"/><rect x="7" y="1" width="2" height="1" fill="#9ee"/><rect x="11" y="1" width="2" height="1" fill="#9ee"/><path d="M9 3.3 a1.6 1.6 0 1 0 0 3" stroke="#e8f6ff" fill="none" stroke-width="0.9"/><path d="M4 3 V5 M3 4 H5 M12 2.5 V4.5 M11 3.5 H13" stroke="#e8f6ff" stroke-width="0.7"/></svg><div class="hd"></div><span class="lbl">Swisstopo - ch.baspo.nationales-sportanlagenkonzept</span></div>
<div class="row" style="top:576px"><svg width="16" height="14" viewBox="0 0 16 14" style="position:absolute;left:48px;top:1px"><rect x="0.5" y="0.5" width="15" height="13" fill="#fff" stroke="#6e6e6e"/><rect x="2" y="2" width="12" height="10" fill="#5aa2e6"/><rect x="2" y="2" width="12" height="3" fill="#7dbcf0"/><path d="M2 12 L2 8.5 L5 6 L8.5 9.5 L11.5 6 L14 8.5 L14 12 Z" fill="#555"/><rect x="3" y="1" width="2" height="1" fill="#9ee"/><rect x="7" y="1" width="2" height="1" fill="#9ee"/><rect x="11" y="1" width="2" height="1" fill="#9ee"/><path d="M9 3.3 a1.6 1.6 0 1 0 0 3" stroke="#e8f6ff" fill="none" stroke-width="0.9"/><path d="M4 3 V5 M3 4 H5 M12 2.5 V4.5 M11 3.5 H13" stroke="#e8f6ff" stroke-width="0.7"/></svg><div class="hd"></div><span class="lbl">Swisstopo - ch.bav.schienennetz</span></div>
<div class="row" style="top:594px"><svg width="16" height="14" viewBox="0 0 16 14" style="position:absolute;left:48px;top:1px"><rect x="0.5" y="0.5" width="15" height="13" fill="#fff" stroke="#6e6e6e"/><rect x="2" y="2" width="12" height="10" fill="#5aa2e6"/><rect x="2" y="2" width="12" height="3" fill="#7dbcf0"/><path d="M2 12 L2 8.5 L5 6 L8.5 9.5 L11.5 6 L14 8.5 L14 12 Z" fill="#555"/><rect x="3" y="1" width="2" height="1" fill="#9ee"/><rect x="7" y="1" width="2" height="1" fill="#9ee"/><rect x="11" y="1" width="2" height="1" fill="#9ee"/><path d="M9 3.3 a1.6 1.6 0 1 0 0 3" stroke="#e8f6ff" fill="none" stroke-width="0.9"/><path d="M4 3 V5 M3 4 H5 M12 2.5 V4.5 M11 3.5 H13" stroke="#e8f6ff" stroke-width="0.7"/></svg><div class="hd"></div><span class="lbl">Swisstopo - ch.bazl.bebaute-gebiete_luftfahrtrecht</span></div>
<div class="row" style="top:612px"><svg width="16" height="14" viewBox="0 0 16 14" style="position:absolute;left:48px;top:1px"><rect x="0.5" y="0.5" width="15" height="13" fill="#fff" stroke="#6e6e6e"/><rect x="2" y="2" width="12" height="10" fill="#5aa2e6"/><rect x="2" y="2" width="12" height="3" fill="#7dbcf0"/><path d="M2 12 L2 8.5 L5 6 L8.5 9.5 L11.5 6 L14 8.5 L14 12 Z" fill="#555"/><rect x="3" y="1" width="2" height="1" fill="#9ee"/><rect x="7" y="1" width="2" height="1" fill="#9ee"/><rect x="11" y="1" width="2" height="1" fill="#9ee"/><path d="M9 3.3 a1.6 1.6 0 1 0 0 3" stroke="#e8f6ff" fill="none" stroke-width="0.9"/><path d="M4 3 V5 M3 4 H5 M12 2.5 V4.5 M11 3.5 H13" stroke="#e8f6ff" stroke-width="0.7"/></svg><div class="hd"></div><span class="lbl">Swisstopo - ch.kantone.cadastralwebmap-farbe</span></div>
<div class="row" style="top:630px"><svg width="16" height="14" viewBox="0 0 16 14" style="position:absolute;left:48px;top:1px"><rect x="0.5" y="0.5" width="15" height="13" fill="#fff" stroke="#6e6e6e"/><rect x="2" y="2" width="12" height="10" fill="#5aa2e6"/><rect x="2" y="2" width="12" height="3" fill="#7dbcf0"/><path d="M2 12 L2 8.5 L5 6 L8.5 9.5 L11.5 6 L14 8.5 L14 12 Z" fill="#555"/><rect x="3" y="1" width="2" height="1" fill="#9ee"/><rect x="7" y="1" width="2" height="1" fill="#9ee"/><rect x="11" y="1" width="2" height="1" fill="#9ee"/><path d="M9 3.3 a1.6 1.6 0 1 0 0 3" stroke="#e8f6ff" fill="none" stroke-width="0.9"/><path d="M4 3 V5 M3 4 H5 M12 2.5 V4.5 M11 3.5 H13" stroke="#e8f6ff" stroke-width="0.7"/></svg><div class="hd"></div><span class="lbl">Swisstopo - ch.nagra.aeromagnetische-karte_1100</span></div>
<div class="row" style="top:648px"><svg width="16" height="14" viewBox="0 0 16 14" style="position:absolute;left:48px;top:1px"><rect x="0.5" y="0.5" width="15" height="13" fill="#fff" stroke="#6e6e6e"/><rect x="2" y="2" width="12" height="10" fill="#5aa2e6"/><rect x="2" y="2" width="12" height="3" fill="#7dbcf0"/><path d="M2 12 L2 8.5 L5 6 L8.5 9.5 L11.5 6 L14 8.5 L14 12 Z" fill="#555"/><rect x="3" y="1" width="2" height="1" fill="#9ee"/><rect x="7" y="1" width="2" height="1" fill="#9ee"/><rect x="11" y="1" width="2" height="1" fill="#9ee"/><path d="M9 3.3 a1.6 1.6 0 1 0 0 3" stroke="#e8f6ff" fill="none" stroke-width="0.9"/><path d="M4 3 V5 M3 4 H5 M12 2.5 V4.5 M11 3.5 H13" stroke="#e8f6ff" stroke-width="0.7"/></svg><div class="hd"></div><span class="lbl">Swisstopo - ch.nagra.aeromagnetische-karte_1500</span></div>
<div class="row" style="top:666px"><svg width="16" height="14" viewBox="0 0 16 14" style="position:absolute;left:48px;top:1px"><rect x="0.5" y="0.5" width="15" height="13" fill="#fff" stroke="#6e6e6e"/><rect x="2" y="2" width="12" height="10" fill="#5aa2e6"/><rect x="2" y="2" width="12" height="3" fill="#7dbcf0"/><path d="M2 12 L2 8.5 L5 6 L8.5 9.5 L11.5 6 L14 8.5 L14 12 Z" fill="#555"/><rect x="3" y="1" width="2" height="1" fill="#9ee"/><rect x="7" y="1" width="2" height="1" fill="#9ee"/><rect x="11" y="1" width="2" height="1" fill="#9ee"/><path d="M9 3.3 a1.6 1.6 0 1 0 0 3" stroke="#e8f6ff" fill="none" stroke-width="0.9"/><path d="M4 3 V5 M3 4 H5 M12 2.5 V4.5 M11 3.5 H13" stroke="#e8f6ff" stroke-width="0.7"/></svg><div class="hd"></div><span class="lbl">Swisstopo - ch.swisstopo-karto.hangneigung</span></div>
<div class="row" style="top:684px"><svg width="16" height="14" viewBox="0 0 16 14" style="position:absolute;left:48px;top:1px"><rect x="0.5" y="0.5" width="15" height="13" fill="#fff" stroke="#6e6e6e"/><rect x="2" y="2" width="12" height="10" fill="#5aa2e6"/><rect x="2" y="2" width="12" height="3" fill="#7dbcf0"/><path d="M2 12 L2 8.5 L5 6 L8.5 9.5 L11.5 6 L14 8.5 L14 12 Z" fill="#555"/><rect x="3" y="1" width="2" height="1" fill="#9ee"/><rect x="7" y="1" width="2" height="1" fill="#9ee"/><rect x="11" y="1" width="2" height="1" fill="#9ee"/><path d="M9 3.3 a1.6 1.6 0 1 0 0 3" stroke="#e8f6ff" fill="none" stroke-width="0.9"/><path d="M4 3 V5 M3 4 H5 M12 2.5 V4.5 M11 3.5 H13" stroke="#e8f6ff" stroke-width="0.7"/></svg><div class="hd"></div><span class="lbl">Swisstopo - ch.swisstopo-karto.schneeschuhrouten</span></div>
<div class="row" style="top:702px"><svg width="16" height="14" viewBox="0 0 16 14" style="position:absolute;left:48px;top:1px"><rect x="0.5" y="0.5" width="15" height="13" fill="#fff" stroke="#6e6e6e"/><rect x="2" y="2" width="12" height="10" fill="#5aa2e6"/><rect x="2" y="2" width="12" height="3" fill="#7dbcf0"/><path d="M2 12 L2 8.5 L5 6 L8.5 9.5 L11.5 6 L14 8.5 L14 12 Z" fill="#555"/><rect x="3" y="1" width="2" height="1" fill="#9ee"/><rect x="7" y="1" width="2" height="1" fill="#9ee"/><rect x="11" y="1" width="2" height="1" fill="#9ee"/><path d="M9 3.3 a1.6 1.6 0 1 0 0 3" stroke="#e8f6ff" fill="none" stroke-width="0.9"/><path d="M4 3 V5 M3 4 H5 M12 2.5 V4.5 M11 3.5 H13" stroke="#e8f6ff" stroke-width="0.7"/></svg><div class="hd"></div><span class="lbl">Swisstopo - ch.swisstopo-karto.skitouren</span></div>
<div class="row" style="top:720px"><svg width="16" height="14" viewBox="0 0 16 14" style="position:absolute;left:48px;top:1px"><rect x="0.5" y="0.5" width="15" height="13" fill="#fff" stroke="#6e6e6e"/><rect x="2" y="2" width="12" height="10" fill="#5aa2e6"/><rect x="2" y="2" width="12" height="3" fill="#7dbcf0"/><path d="M2 12 L2 8.5 L5 6 L8.5 9.5 L11.5 6 L14 8.5 L14 12 Z" fill="#555"/><rect x="3" y="1" width="2" height="1" fill="#9ee"/><rect x="7" y="1" width="2" height="1" fill="#9ee"/><rect x="11" y="1" width="2" height="1" fill="#9ee"/><path d="M9 3.3 a1.6 1.6 0 1 0 0 3" stroke="#e8f6ff" fill="none" stroke-width="0.9"/><path d="M4 3 V5 M3 4 H5 M12 2.5 V4.5 M11 3.5 H13" stroke="#e8f6ff" stroke-width="0.7"/></svg><div class="hd"></div><span class="lbl">Swisstopo - ch.swisstopo-vd.spannungsarme-gebiete</span></div>
<div class="row" style="top:738px"><svg width="16" height="14" viewBox="0 0 16 14" style="position:absolute;left:48px;top:1px"><rect x="0.5" y="0.5" width="15" height="13" fill="#fff" stroke="#6e6e6e"/><rect x="2" y="2" width="12" height="10" fill="#5aa2e6"/><rect x="2" y="2" width="12" height="3" fill="#7dbcf0"/><path d="M2 12 L2 8.5 L5 6 L8.5 9.5 L11.5 6 L14 8.5 L14 12 Z" fill="#555"/><rect x="3" y="1" width="2" height="1" fill="#9ee"/><rect x="7" y="1" width="2" height="1" fill="#9ee"/><rect x="11" y="1" width="2" height="1" fill="#9ee"/><path d="M9 3.3 a1.6 1.6 0 1 0 0 3" stroke="#e8f6ff" fill="none" stroke-width="0.9"/><path d="M4 3 V5 M3 4 H5 M12 2.5 V4.5 M11 3.5 H13" stroke="#e8f6ff" stroke-width="0.7"/></svg><div class="hd"></div><span class="lbl">Swisstopo - ch.swisstopo.bahnen-winter</span></div>
<div class="row" style="top:756px"><svg width="16" height="14" viewBox="0 0 16 14" style="position:absolute;left:48px;top:1px"><rect x="0.5" y="0.5" width="15" height="13" fill="#fff" stroke="#6e6e6e"/><rect x="2" y="2" width="12" height="10" fill="#5aa2e6"/><rect x="2" y="2" width="12" height="3" fill="#7dbcf0"/><path d="M2 12 L2 8.5 L5 6 L8.5 9.5 L11.5 6 L14 8.5 L14 12 Z" fill="#555"/><rect x="3" y="1" width="2" height="1" fill="#9ee"/><rect x="7" y="1" width="2" height="1" fill="#9ee"/><rect x="11" y="1" width="2" height="1" fill="#9ee"/><path d="M9 3.3 a1.6 1.6 0 1 0 0 3" stroke="#e8f6ff" fill="none" stroke-width="0.9"/><path d="M4 3 V5 M3 4 H5 M12 2.5 V4.5 M11 3.5 H13" stroke="#e8f6ff" stroke-width="0.7"/></svg><div class="hd"></div><span class="lbl">Swisstopo - ch.swisstopo.digitales-hoehenmodell_25_reliefschattierung</span></div>
<div class="row" style="top:774px"><svg width="16" height="14" viewBox="0 0 16 14" style="position:absolute;left:48px;top:1px"><rect x="0.5" y="0.5" width="15" height="13" fill="#fff" stroke="#6e6e6e"/><rect x="2" y="2" width="12" height="10" fill="#5aa2e6"/><rect x="2" y="2" width="12" height="3" fill="#7dbcf0"/><path d="M2 12 L2 8.5 L5 6 L8.5 9.5 L11.5 6 L14 8.5 L14 12 Z" fill="#555"/><rect x="3" y="1" width="2" height="1" fill="#9ee"/><rect x="7" y="1" width="2" height="1" fill="#9ee"/><rect x="11" y="1" width="2" height="1" fill="#9ee"/><path d="M9 3.3 a1.6 1.6 0 1 0 0 3" stroke="#e8f6ff" fill="none" stroke-width="0.9"/><path d="M4 3 V5 M3 4 H5 M12 2.5 V4.5 M11 3.5 H13" stroke="#e8f6ff" stroke-width="0.7"/></svg><div class="hd"></div><span class="lbl">Swisstopo - ch.swisstopo.dreiecksvermaschung</span></div>
<div class="row" style="top:792px"><svg width="16" height="14" viewBox="0 0 16 14" style="position:absolute;left:48px;top:1px"><rect x="0.5" y="0.5" width="15" height="13" fill="#fff" stroke="#6e6e6e"/><rect x="2" y="2" width="12" height="10" fill="#5aa2e6"/><rect x="2" y="2" width="12" height="3" fill="#7dbcf0"/><path d="M2 12 L2 8.5 L5 6 L8.5 9.5 L11.5 6 L14 8.5 L14 12 Z" fill="#555"/><rect x="3" y="1" width="2" height="1" fill="#9ee"/><rect x="7" y="1" width="2" height="1" fill="#9ee"/><rect x="11" y="1" width="2" height="1" fill="#9ee"/><path d="M9 3.3 a1.6 1.6 0 1 0 0 3" stroke="#e8f6ff" fill="none" stroke-width="0.9"/><path d="M4 3 V5 M3 4 H5 M12 2.5 V4.5 M11 3.5 H13" stroke="#e8f6ff" stroke-width="0.7"/></svg><div class="hd"></div><span class="lbl">Swisstopo - ch.swisstopo.fixpunkte-agnes</span></div>
<div class="row" style="top:810px"><svg width="16" height="14" viewBox="0 0 16 14" style="position:absolute;left:48px;top:1px"><rect x="0.5" y="0.5" width="15" height="13" fill="#fff" stroke="#6e6e6e"/><rect x="2" y="2" width="12" height="10" fill="#5aa2e6"/><rect x="2" y="2" width="12" height="3" fill="#7dbcf0"/><path d="M2 12 L2 8.5 L5 6 L8.5 9.5 L11.5 6 L14 8.5 L14 12 Z" fill="#555"/><rect x="3" y="1" width="2" height="1" fill="#9ee"/><rect x="7" y="1" width="2" height="1" fill="#9ee"/><rect x="11" y="1" width="2" height="1" fill="#9ee"/><path d="M9 3.3 a1.6 1.6 0 1 0 0 3" stroke="#e8f6ff" fill="none" stroke-width="0.9"/><path d="M4 3 V5 M3 4 H5 M12 2.5 V4.5 M11 3.5 H13" stroke="#e8f6ff" stroke-width="0.7"/></svg><div class="hd"></div><span class="lbl">Swisstopo - ch.swisstopo.geoidmodell-ch1903</span></div>
<div class="row" style="top:828px"><svg width="16" height="14" viewBox="0 0 16 14" style="position:absolute;left:48px;top:1px"><rect x="0.5" y="0.5" width="15" height="13" fill="#fff" stroke="#6e6e6e"/><rect x="2" y="2" width="12" height="10" fill="#5aa2e6"/><rect x="2" y="2" width="12" height="3" fill="#7dbcf0"/><path d="M2 12 L2 8.5 L5 6 L8.5 9.5 L11.5 6 L14 8.5 L14 12 Z" fill="#555"/><rect x="3" y="1" width="2" height="1" fill="#9ee"/><rect x="7" y="1" width="2" height="1" fill="#9ee"/><rect x="11" y="1" width="2" height="1" fill="#9ee"/><path d="M9 3.3 a1.6 1.6 0 1 0 0 3" stroke="#e8f6ff" fill="none" stroke-width="0.9"/><path d="M4 3 V5 M3 4 H5 M12 2.5 V4.5 M11 3.5 H13" stroke="#e8f6ff" stroke-width="0.7"/></svg><div class="hd"></div><span class="lbl">Swisstopo - ch.swisstopo.geoidmodell-etrs89</span></div>
<div class="row" style="top:846px"><svg width="16" height="14" viewBox="0 0 16 14" style="position:absolute;left:48px;top:1px"><rect x="0.5" y="0.5" width="15" height="13" fill="#fff" stroke="#6e6e6e"/><rect x="2" y="2" width="12" height="10" fill="#5aa2e6"/><rect x="2" y="2" width="12" height="3" fill="#7dbcf0"/><path d="M2 12 L2 8.5 L5 6 L8.5 9.5 L11.5 6 L14 8.5 L14 12 Z" fill="#555"/><rect x="3" y="1" width="2" height="1" fill="#9ee"/><rect x="7" y="1" width="2" height="1" fill="#9ee"/><rect x="11" y="1" width="2" height="1" fill="#9ee"/><path d="M9 3.3 a1.6 1.6 0 1 0 0 3" stroke="#e8f6ff" fill="none" stroke-width="0.9"/><path d="M4 3 V5 M3 4 H5 M12 2.5 V4.5 M11 3.5 H13" stroke="#e8f6ff" stroke-width="0.7"/></svg><div class="hd"></div><span class="lbl">Swisstopo - ch.swisstopo.geologie-bodenunruhe</span></div>
<div class="row" style="top:864px"><svg width="16" height="14" viewBox="0 0 16 14" style="position:absolute;left:48px;top:1px"><rect x="0.5" y="0.5" width="15" height="13" fill="#fff" stroke="#6e6e6e"/><rect x="2" y="2" width="12" height="10" fill="#5aa2e6"/><rect x="2" y="2" width="12" height="3" fill="#7dbcf0"/><path d="M2 12 L2 8.5 L5 6 L8.5 9.5 L11.5 6 L14 8.5 L14 12 Z" fill="#555"/><rect x="3" y="1" width="2" height="1" fill="#9ee"/><rect x="7" y="1" width="2" height="1" fill="#9ee"/><rect x="11" y="1" width="2" height="1" fill="#9ee"/><path d="M9 3.3 a1.6 1.6 0 1 0 0 3" stroke="#e8f6ff" fill="none" stroke-width="0.9"/><path d="M4 3 V5 M3 4 H5 M12 2.5 V4.5 M11 3.5 H13" stroke="#e8f6ff" stroke-width="0.7"/></svg><div class="hd"></div><span class="lbl">Swisstopo - ch.swisstopo.geologie-dosisleistung-terrestrisch</span></div>
<div class="row" style="top:882px"><svg width="16" height="14" viewBox="0 0 16 14" style="position:absolute;left:48px;top:1px"><rect x="0.5" y="0.5" width="15" height="13" fill="#fff" stroke="#6e6e6e"/><rect x="2" y="2" width="12" height="10" fill="#5aa2e6"/><rect x="2" y="2" width="12" height="3" fill="#7dbcf0"/><path d="M2 12 L2 8.5 L5 6 L8.5 9.5 L11.5 6 L14 8.5 L14 12 Z" fill="#555"/><rect x="3" y="1" width="2" height="1" fill="#9ee"/><rect x="7" y="1" width="2" height="1" fill="#9ee"/><rect x="11" y="1" width="2" height="1" fill="#9ee"/><path d="M9 3.3 a1.6 1.6 0 1 0 0 3" stroke="#e8f6ff" fill="none" stroke-width="0.9"/><path d="M4 3 V5 M3 4 H5 M12 2.5 V4.5 M11 3.5 H13" stroke="#e8f6ff" stroke-width="0.7"/></svg><div class="hd"></div><span class="lbl">Swisstopo - ch.swisstopo.geologie-eiszeit-lgm</span></div>
</div>
<!-- scrollbar -->
<div class="abs" style="left:573px;top:110px;width:19px;height:899px;background:#f0f0f0"></div>
<div class="abs" style="left:581px;top:569px;width:2px;height:102px;background:#858585"></div>

<!-- right: toolbar -->
<div class="abs" style="left:594px;top:42px;width:1326px;height:972px;background:#f0f0f0"></div>
<div class="abs" style="left:600px;top:44px;width:1320px;height:2px;border-top:1px solid #a0a0a0;border-bottom:1px solid #fff"></div>
<div class="abs" style="left:600px;top:46px;width:1320px;height:28px;background:#f0f0f0"></div><div class="abs" style="left:1918px;top:44px;width:2px;height:30px;background:#8a8a8a"></div><div class="abs" style="left:599px;top:44px;width:1px;height:970px;background:#fff"></div>
<svg class="abs" style="left:612px;top:50px" width="16" height="16" viewBox="0 0 16 16"><circle cx="6" cy="6.5" r="5.3" fill="#fff" stroke="#000050" stroke-width="1.3"/><path d="M6 3.5 V9.5 M3 6.5 H9" stroke="#000050" stroke-width="2.2"/><path d="M9.8 10.3 L14.6 15.1" stroke="#000050" stroke-width="2"/></svg>
<span class="tb" style="left:632px">Zoom in</span>
<span class="tb" style="left:718px;color:#a0a0a0">Zoom out</span>
<div class="abs" style="left:783px;top:48px;width:2px;height:22px;border-left:1px solid #a0a0a0;border-right:1px solid #fff"></div>
<div class="abs" style="left:788px;top:48px;width:90px;height:22px;border-left:1px solid #a0a0a0;border-top:1px solid #a0a0a0;border-right:1px solid #fff;border-bottom:1px solid #fff;background:#f8f8f8"></div>
<svg class="abs" style="left:801px;top:53px" width="14" height="16" viewBox="0 0 14 16"><path transform="translate(1 1.2) scale(0.86)" d="M3.5 9 V4 a1 1 0 0 1 2 0 V8 V2.5 a1 1 0 0 1 2 0 V8 V3 a1 1 0 0 1 2 0 V8 V4.5 a1 1 0 0 1 2 0 V10 c0 3 -1.5 5 -4 5 h-1.5 c-1.5 0 -2.5 -1 -3.5 -2.5 L1 10 a1 1 0 0 1 1.8 -1Z" fill="#fff" stroke="#333" stroke-width="0.9"/></svg>
<span class="tb" style="left:819px;top:53px">Pan map</span>
<svg class="abs" style="left:885px;top:52px" width="15" height="15" viewBox="0 0 15 15"><rect x="1" y="1" width="13" height="13" rx="2.5" fill="none" stroke="#222" stroke-width="1.4" stroke-dasharray="4 2.5" stroke-dashoffset="-1"/></svg>
<span class="tb" style="left:905px">Rectangle</span>
<div class="abs" style="left:976px;top:48px;width:281px;height:22px;background:#fff"></div>
<svg class="abs" style="left:1263px;top:50px" width="16" height="16" viewBox="0 0 16 16"><path d="M8 1 V11 M4.5 7.5 L8 11 L11.5 7.5 M1.5 10 V14 H14.5 V10" fill="none" stroke="#333" stroke-width="1.1"/></svg>
<span class="tb" style="left:1283px">Download</span>

<!-- map area -->
<div class="abs" style="left:599px;top:74px;width:1321px;height:939px;background:#fff;border-right:2px solid #8a8a8a;border-bottom:2px solid #8a8a8a"></div>
<div class="abs" style="left:600px;top:73px;width:1316px;height:938px;overflow:hidden"><svg width="1316" height="938" style="position:absolute;left:0;top:0"><defs><symbol id="qm" width="10" height="10"><rect x="0.5" y="0.5" width="9" height="9" fill="#ee74ee" stroke="#000" stroke-width="1"/><path d="M5 0V10M0 5H10" stroke="#000" stroke-width="1.1"/></symbol><symbol id="qy" width="10" height="10"><rect x="0.5" y="0.5" width="9" height="9" fill="#f4f000" stroke="#000" stroke-width="1"/><path d="M5 0V10M0 5H10" stroke="#000" stroke-width="1.1"/></symbol><symbol id="qg" width="10" height="10"><rect x="0.5" y="0.5" width="9" height="9" fill="#6ee46e" stroke="#000" stroke-width="1"/><path d="M5 0V10M0 5H10" stroke="#000" stroke-width="1.1"/></symbol><symbol id="qd" width="10" height="10"><rect x="0.5" y="0.5" width="9" height="9" fill="#2c9a24" stroke="#000" stroke-width="1"/><path d="M5 0V10M0 5H10" stroke="#000" stroke-width="1.1"/></symbol><symbol id="qb" width="10" height="10"><rect x="0.5" y="0.5" width="9" height="9" fill="#4848ec" stroke="#000" stroke-width="1"/><path d="M5 0V10M0 5H10" stroke="#000" stroke-width="1.1"/></symbol><symbol id="qc" width="10" height="10"><rect x="0.5" y="0.5" width="9" height="9" fill="#1eaac4" stroke="#000" stroke-width="1"/><path d="M5 0V10M0 5H10" stroke="#000" stroke-width="1.1"/></symbol><symbol id="ql" width="10" height="10"><rect x="0.5" y="0.5" width="9" height="9" fill="#94f6f6" stroke="#000" stroke-width="1"/><path d="M5 0V10M0 5H10" stroke="#000" stroke-width="1.1"/></symbol><symbol id="qo" width="10" height="10"><rect x="0.5" y="0.5" width="9" height="9" fill="#d0661a" stroke="#000" stroke-width="1"/><path d="M5 0V10M0 5H10" stroke="#000" stroke-width="1.1"/></symbol><symbol id="qk" width="10" height="10"><rect x="0.5" y="0.5" width="9" height="9" fill="#909090" stroke="#000" stroke-width="1"/><path d="M5 0V10M0 5H10" stroke="#000" stroke-width="1.1"/></symbol></defs><use href="#qm" x="476" y="391"/><use href="#qm" x="484" y="395"/><use href="#qc" x="475" y="401"/><use href="#qm" x="476" y="405"/><use href="#qb" x="475" y="406"/><use href="#qm" x="482" y="386"/><use href="#qo" x="504" y="382"/><use href="#qm" x="496" y="389"/><use href="#qy" x="494" y="397"/><use href="#qd" x="501" y="397"/><use href="#qg" x="509" y="396"/><use href="#qy" x="515" y="393"/><use href="#qo" x="523" y="392"/><use href="#qy" x="514" y="402"/><use href="#qy" x="522" y="382"/><use href="#qd" x="531" y="385"/><use href="#qm" x="532" y="391"/><use href="#qm" x="548" y="389"/><use href="#qy" x="555" y="394"/><use href="#qm" x="564" y="395"/><use href="#qg" x="559" y="382"/><use href="#qg" x="564" y="382"/><use href="#qy" x="573" y="386"/><use href="#ql" x="571" y="394"/><use href="#qy" x="573" y="399"/><use href="#qg" x="570" y="403"/><use href="#qc" x="585" y="397"/><use href="#qb" x="596" y="392"/><use href="#qm" x="608" y="394"/><use href="#qm" x="608" y="403"/><use href="#qm" x="598" y="382"/><use href="#qy" x="606" y="382"/><use href="#qy" x="587" y="382"/><use href="#qk" x="536" y="403"/><use href="#qy" x="545" y="401"/><use href="#qg" x="532" y="408"/><use href="#qy" x="544" y="410"/><use href="#qm" x="567" y="416"/><use href="#qg" x="577" y="414"/><use href="#qy" x="583" y="409"/><use href="#qg" x="592" y="406"/><use href="#qy" x="592" y="412"/><use href="#qy" x="603" y="409"/><use href="#qg" x="607" y="412"/><use href="#qm" x="596" y="418"/><use href="#qb" x="589" y="420"/><use href="#qm" x="612" y="420"/><use href="#qm" x="501" y="408"/><use href="#qo" x="509" y="407"/><use href="#qg" x="517" y="410"/><use href="#qy" x="521" y="412"/><use href="#qm" x="504" y="415"/><use href="#qm" x="496" y="417"/><use href="#qg" x="486" y="414"/><use href="#qy" x="486" y="419"/><use href="#qc" x="507" y="418"/><use href="#qg" x="519" y="423"/><use href="#qg" x="528" y="421"/><use href="#qm" x="552" y="422"/><use href="#qm" x="561" y="424"/><use href="#qm" x="544" y="431"/><use href="#qm" x="478" y="424"/><use href="#qc" x="495" y="430"/><use href="#qm" x="501" y="434"/><use href="#qg" x="515" y="428"/><use href="#qm" x="526" y="430"/><use href="#qm" x="525" y="437"/><use href="#qk" x="483" y="436"/><use href="#qy" x="475" y="438"/><use href="#qy" x="518" y="438"/><use href="#qo" x="533" y="439"/><use href="#qm" x="580" y="431"/><use href="#qm" x="590" y="430"/><use href="#qg" x="599" y="429"/><use href="#qg" x="611" y="427"/><use href="#qy" x="580" y="441"/><use href="#qm" x="558" y="444"/><use href="#qm" x="568" y="444"/><use href="#qm" x="506" y="444"/><use href="#qy" x="605" y="382"/><use href="#qb" x="625" y="382"/><use href="#qm" x="642" y="385"/><use href="#qg" x="652" y="385"/><use href="#ql" x="663" y="382"/><use href="#ql" x="672" y="382"/><use href="#qm" x="682" y="383"/><use href="#qb" x="690" y="387"/><use href="#qd" x="702" y="383"/><use href="#qg" x="712" y="382"/><use href="#qy" x="727" y="382"/><use href="#qy" x="735" y="384"/><use href="#qd" x="752" y="382"/><use href="#qy" x="749" y="385"/><use href="#qo" x="758" y="390"/><use href="#qm" x="610" y="394"/><use href="#qd" x="620" y="394"/><use href="#qy" x="632" y="389"/><use href="#qy" x="632" y="398"/><use href="#qm" x="608" y="404"/><use href="#qm" x="650" y="395"/><use href="#qm" x="655" y="393"/><use href="#ql" x="647" y="401"/><use href="#qg" x="670" y="393"/><use href="#qy" x="677" y="391"/><use href="#qm" x="682" y="395"/><use href="#qm" x="692" y="395"/><use href="#qg" x="667" y="402"/><use href="#qy" x="711" y="400"/><use href="#qg" x="712" y="394"/><use href="#qc" x="719" y="404"/><use href="#qm" x="738" y="395"/><use href="#qm" x="748" y="395"/><use href="#qm" x="740" y="404"/><use href="#qm" x="746" y="408"/><use href="#qb" x="722" y="412"/><use href="#qc" x="722" y="417"/><use href="#qy" x="617" y="407"/><use href="#qm" x="620" y="406"/><use href="#qb" x="625" y="406"/><use href="#qm" x="643" y="405"/><use href="#qm" x="634" y="410"/><use href="#qm" x="655" y="407"/><use href="#qy" x="661" y="406"/><use href="#qm" x="665" y="411"/><use href="#qm" x="680" y="410"/><use href="#qm" x="670" y="415"/><use href="#qy" x="690" y="414"/><use href="#qm" x="687" y="417"/><use href="#qy" x="677" y="418"/><use href="#qg" x="607" y="412"/><use href="#ql" x="624" y="415"/><use href="#qy" x="630" y="415"/><use href="#qy" x="642" y="414"/><use href="#qm" x="612" y="420"/><use href="#qg" x="610" y="427"/><use href="#ql" x="624" y="424"/><use href="#qd" x="631" y="426"/><use href="#ql" x="656" y="423"/><use href="#qm" x="672" y="430"/><use href="#qm" x="680" y="431"/><use href="#qy" x="691" y="429"/><use href="#qm" x="686" y="434"/><use href="#qm" x="703" y="429"/><use href="#qm" x="733" y="431"/><use href="#qm" x="632" y="436"/><use href="#qy" x="647" y="436"/><use href="#qy" x="658" y="439"/><use href="#qc" x="642" y="442"/><use href="#qm" x="670" y="442"/><use href="#qb" x="702" y="438"/><use href="#qm" x="710" y="439"/><use href="#qm" x="719" y="437"/><use href="#qm" x="611" y="267"/><use href="#qm" x="617" y="268"/><use href="#qm" x="617" y="275"/><use href="#qb" x="622" y="266"/><use href="#qy" x="629" y="273"/><use href="#qo" x="626" y="280"/><use href="#qy" x="640" y="279"/><use href="#qm" x="595" y="277"/><use href="#qy" x="586" y="280"/><use href="#qm" x="548" y="278"/><use href="#qm" x="540" y="280"/><use href="#qy" x="549" y="284"/><use href="#qk" x="520" y="279"/><use href="#qm" x="559" y="284"/><use href="#qc" x="529" y="286"/><use href="#qm" x="523" y="289"/><use href="#qy" x="520" y="291"/><use href="#qy" x="544" y="283"/><use href="#qy" x="551" y="287"/><use href="#qm" x="560" y="284"/><use href="#qy" x="568" y="287"/><use href="#qm" x="573" y="287"/><use href="#qm" x="612" y="272"/><use href="#qm" x="629" y="273"/><use href="#qy" x="641" y="279"/><use href="#qc" x="602" y="289"/><use href="#qm" x="613" y="287"/><use href="#qy" x="629" y="288"/><use href="#qm" x="636" y="291"/><use href="#qm" x="644" y="290"/><use href="#qm" x="524" y="297"/><use href="#qm" x="534" y="297"/><use href="#qo" x="526" y="301"/><use href="#qg" x="520" y="300"/><use href="#qm" x="536" y="306"/><use href="#qg" x="547" y="307"/><use href="#qy" x="576" y="297"/><use href="#qy" x="584" y="297"/><use href="#qb" x="593" y="299"/><use href="#qb" x="585" y="307"/><use href="#qm" x="617" y="298"/><use href="#qb" x="613" y="301"/><use href="#qc" x="621" y="298"/><use href="#qy" x="628" y="302"/><use href="#qy" x="637" y="299"/><use href="#ql" x="528" y="311"/><use href="#qm" x="520" y="316"/><use href="#qm" x="537" y="311"/><use href="#qm" x="551" y="311"/><use href="#qy" x="555" y="312"/><use href="#qm" x="564" y="310"/><use href="#qd" x="577" y="310"/><use href="#qg" x="586" y="314"/><use href="#qm" x="571" y="316"/><use href="#qc" x="606" y="308"/><use href="#qg" x="610" y="311"/><use href="#qy" x="615" y="311"/><use href="#qm" x="625" y="309"/><use href="#qm" x="632" y="310"/><use href="#qy" x="644" y="308"/><use href="#qm" x="528" y="320"/><use href="#qg" x="542" y="322"/><use href="#qm" x="551" y="323"/><use href="#qy" x="577" y="322"/><use href="#qb" x="586" y="326"/><use href="#qm" x="605" y="317"/><use href="#qm" x="617" y="319"/><use href="#qm" x="631" y="324"/><use href="#qk" x="642" y="318"/><use href="#qd" x="595" y="327"/><use href="#ql" x="604" y="327"/><use href="#ql" x="612" y="328"/><use href="#qd" x="616" y="329"/><use href="#qm" x="603" y="330"/><use href="#qm" x="520" y="325"/><use href="#qy" x="529" y="329"/><use href="#qm" x="538" y="330"/><use href="#qg" x="552" y="332"/><use href="#qy" x="562" y="329"/><use href="#qm" x="564" y="334"/><use href="#qg" x="571" y="332"/><use href="#qo" x="583" y="334"/><use href="#qg" x="593" y="337"/><use href="#qm" x="626" y="332"/><use href="#qb" x="644" y="332"/><use href="#qm" x="533" y="339"/><use href="#qm" x="524" y="344"/><use href="#qy" x="550" y="344"/><use href="#qm" x="581" y="340"/><use href="#qm" x="574" y="343"/><use href="#qg" x="604" y="339"/><use href="#ql" x="606" y="343"/><use href="#qm" x="624" y="341"/><use href="#qy" x="638" y="339"/><use href="#qb" x="684" y="218"/><use href="#qm" x="669" y="225"/><use href="#qm" x="687" y="227"/><use href="#qg" x="689" y="231"/><use href="#qg" x="700" y="232"/><use href="#qc" x="704" y="231"/><use href="#qy" x="698" y="238"/><use href="#qy" x="695" y="243"/><use href="#qm" x="659" y="248"/><use href="#qc" x="673" y="246"/><use href="#qm" x="677" y="246"/><use href="#qg" x="682" y="244"/><use href="#qd" x="691" y="248"/><use href="#qy" x="700" y="247"/><use href="#ql" x="706" y="248"/><use href="#qy" x="713" y="253"/><use href="#qm" x="720" y="254"/><use href="#qm" x="726" y="248"/><use href="#qm" x="706" y="257"/><use href="#qm" x="703" y="260"/><use href="#qo" x="700" y="266"/><use href="#qg" x="737" y="259"/><use href="#qg" x="735" y="264"/><use href="#qm" x="756" y="256"/><use href="#qm" x="760" y="251"/><use href="#qd" x="752" y="261"/><use href="#qg" x="748" y="267"/><use href="#qc" x="764" y="267"/><use href="#qo" x="760" y="271"/><use href="#qm" x="752" y="274"/><use href="#qk" x="694" y="271"/><use href="#qm" x="664" y="271"/><use href="#qo" x="669" y="269"/><use href="#qm" x="679" y="271"/><use href="#qm" x="713" y="274"/><use href="#qy" x="721" y="272"/><use href="#qy" x="726" y="275"/><use href="#qc" x="727" y="277"/><use href="#qm" x="737" y="274"/><use href="#ql" x="737" y="279"/><use href="#qy" x="740" y="281"/><use href="#qm" x="702" y="280"/><use href="#qb" x="662" y="279"/><use href="#qm" x="671" y="281"/><use href="#qm" x="679" y="281"/><use href="#qm" x="689" y="280"/><use href="#qy" x="640" y="279"/><use href="#qm" x="680" y="281"/><use href="#qm" x="690" y="281"/><use href="#qm" x="701" y="280"/><use href="#qm" x="713" y="277"/><use href="#qc" x="728" y="277"/><use href="#qm" x="752" y="277"/><use href="#qo" x="764" y="277"/><use href="#qm" x="640" y="292"/><use href="#qm" x="644" y="290"/><use href="#qo" x="652" y="297"/><use href="#qy" x="672" y="293"/><use href="#qc" x="683" y="292"/><use href="#qm" x="691" y="292"/><use href="#qy" x="698" y="292"/><use href="#qd" x="703" y="291"/><use href="#qm" x="713" y="291"/><use href="#qm" x="720" y="289"/><use href="#qy" x="730" y="286"/><use href="#qd" x="728" y="289"/><use href="#qm" x="743" y="288"/><use href="#ql" x="759" y="292"/><use href="#qo" x="766" y="291"/><use href="#qm" x="682" y="298"/><use href="#qy" x="640" y="300"/><use href="#qm" x="647" y="297"/><use href="#qm" x="662" y="301"/><use href="#qy" x="676" y="302"/><use href="#qk" x="687" y="302"/><use href="#qm" x="703" y="305"/><use href="#qc" x="716" y="297"/><use href="#ql" x="714" y="300"/><use href="#qm" x="732" y="298"/><use href="#qo" x="744" y="297"/><use href="#qm" x="748" y="298"/><use href="#qg" x="756" y="300"/><use href="#qy" x="762" y="304"/><use href="#qm" x="659" y="306"/><use href="#qo" x="669" y="308"/><use href="#qy" x="641" y="309"/><use href="#qy" x="648" y="309"/><use href="#qy" x="655" y="310"/><use href="#qy" x="659" y="315"/><use href="#qm" x="647" y="316"/><use href="#qk" x="640" y="318"/><use href="#qy" x="681" y="311"/><use href="#qm" x="694" y="311"/><use href="#qm" x="702" y="312"/><use href="#qm" x="716" y="310"/><use href="#qm" x="733" y="308"/><use href="#qm" x="740" y="310"/><use href="#qc" x="728" y="313"/><use href="#qm" x="756" y="309"/><use href="#qm" x="764" y="309"/><use href="#ql" x="668" y="317"/><use href="#qm" x="676" y="317"/><use href="#qy" x="751" y="317"/><use href="#ql" x="766" y="318"/><use href="#qy" x="695" y="319"/><use href="#qm" x="702" y="319"/><use href="#qm" x="685" y="323"/><use href="#qm" x="662" y="324"/><use href="#qy" x="652" y="325"/><use href="#qk" x="648" y="327"/><use href="#qm" x="709" y="325"/><use href="#qm" x="720" y="329"/><use href="#qy" x="730" y="327"/><use href="#qm" x="740" y="329"/><use href="#qm" x="752" y="325"/><use href="#qy" x="665" y="328"/><use href="#qm" x="666" y="329"/><use href="#qy" x="676" y="328"/><use href="#qy" x="697" y="328"/><use href="#qb" x="643" y="332"/><use href="#qm" x="654" y="334"/><use href="#qm" x="682" y="331"/><use href="#qg" x="692" y="335"/><use href="#qm" x="699" y="335"/><use href="#qm" x="711" y="335"/><use href="#qy" x="732" y="335"/><use href="#qc" x="745" y="337"/><use href="#qm" x="756" y="332"/><use href="#qk" x="667" y="338"/><use href="#qy" x="676" y="340"/><use href="#qm" x="646" y="344"/><use href="#qm" x="654" y="342"/><use href="#qm" x="672" y="347"/><use href="#qy" x="676" y="347"/><use href="#qm" x="697" y="342"/><use href="#qm" x="716" y="342"/><use href="#qy" x="727" y="343"/><use href="#qy" x="743" y="342"/><use href="#qm" x="752" y="345"/><use href="#qd" x="696" y="349"/><use href="#qm" x="707" y="349"/><use href="#qm" x="521" y="344"/><use href="#qy" x="520" y="349"/><use href="#qm" x="534" y="348"/><use href="#qo" x="543" y="349"/><use href="#qb" x="549" y="353"/><use href="#qy" x="549" y="343"/><use href="#qm" x="558" y="345"/><use href="#qd" x="567" y="346"/><use href="#qm" x="576" y="346"/><use href="#qm" x="582" y="340"/><use href="#qy" x="585" y="350"/><use href="#qm" x="594" y="354"/><use href="#qg" x="597" y="342"/><use href="#ql" x="606" y="343"/><use href="#qm" x="615" y="341"/><use href="#qg" x="621" y="345"/><use href="#qg" x="631" y="347"/><use href="#qm" x="625" y="338"/><use href="#qm" x="645" y="344"/><use href="#qy" x="634" y="352"/><use href="#qc" x="645" y="353"/><use href="#qm" x="621" y="355"/><use href="#qy" x="529" y="356"/><use href="#qk" x="520" y="359"/><use href="#qm" x="542" y="358"/><use href="#qy" x="565" y="357"/><use href="#qm" x="571" y="356"/><use href="#qd" x="565" y="362"/><use href="#qm" x="588" y="359"/><use href="#qg" x="601" y="359"/><use href="#qy" x="612" y="358"/><use href="#ql" x="622" y="355"/><use href="#qy" x="637" y="362"/><use href="#qm" x="577" y="364"/><use href="#qm" x="520" y="365"/><use href="#qb" x="525" y="366"/><use href="#qg" x="530" y="365"/><use href="#qm" x="550" y="367"/><use href="#ql" x="546" y="369"/><use href="#qm" x="567" y="371"/><use href="#qm" x="586" y="368"/><use href="#qy" x="588" y="367"/><use href="#qm" x="593" y="370"/><use href="#qy" x="609" y="365"/><use href="#qm" x="618" y="368"/><use href="#qm" x="534" y="373"/><use href="#qc" x="538" y="376"/><use href="#qg" x="525" y="375"/><use href="#qm" x="573" y="375"/><use href="#ql" x="606" y="374"/><use href="#qy" x="521" y="381"/><use href="#qm" x="548" y="376"/><use href="#qg" x="559" y="379"/><use href="#qg" x="563" y="380"/><use href="#qk" x="578" y="378"/><use href="#ql" x="574" y="382"/><use href="#qy" x="586" y="378"/><use href="#qm" x="591" y="380"/><use href="#qm" x="597" y="381"/><use href="#qy" x="606" y="379"/><use href="#qy" x="616" y="378"/><use href="#qb" x="626" y="378"/><use href="#qm" x="634" y="376"/><use href="#qd" x="532" y="384"/><use href="#qy" x="573" y="386"/><use href="#qm" x="642" y="384"/><use href="#qm" x="548" y="388"/><use href="#qm" x="532" y="392"/><use href="#qy" x="520" y="393"/><use href="#qy" x="555" y="394"/><use href="#qb" x="597" y="392"/><use href="#qy" x="632" y="388"/><use href="#qm" x="605" y="390"/><use href="#qm" x="646" y="345"/><use href="#qm" x="655" y="343"/><use href="#qk" x="667" y="338"/><use href="#qy" x="677" y="340"/><use href="#qm" x="655" y="352"/><use href="#qc" x="646" y="355"/><use href="#qy" x="640" y="357"/><use href="#qm" x="642" y="347"/><use href="#qo" x="658" y="357"/><use href="#ql" x="672" y="354"/><use href="#qy" x="677" y="347"/><use href="#qy" x="680" y="356"/><use href="#qm" x="654" y="359"/><use href="#qm" x="668" y="363"/><use href="#qm" x="683" y="364"/><use href="#qd" x="695" y="337"/><use href="#qm" x="697" y="338"/><use href="#qd" x="696" y="349"/><use href="#qm" x="705" y="348"/><use href="#ql" x="706" y="353"/><use href="#qy" x="700" y="360"/><use href="#qm" x="705" y="363"/><use href="#qm" x="712" y="337"/><use href="#qm" x="714" y="342"/><use href="#qy" x="727" y="344"/><use href="#qm" x="718" y="351"/><use href="#qm" x="711" y="363"/><use href="#qy" x="724" y="361"/><use href="#qc" x="734" y="350"/><use href="#qy" x="732" y="337"/><use href="#qc" x="745" y="337"/><use href="#qm" x="754" y="337"/><use href="#qy" x="744" y="343"/><use href="#qm" x="752" y="346"/><use href="#qm" x="744" y="353"/><use href="#qm" x="737" y="359"/><use href="#qm" x="757" y="356"/><use href="#qk" x="752" y="359"/><use href="#qy" x="748" y="360"/><use href="#qg" x="762" y="363"/><use href="#qm" x="649" y="370"/><use href="#qm" x="664" y="367"/><use href="#qb" x="675" y="369"/><use href="#qm" x="686" y="373"/><use href="#ql" x="697" y="371"/><use href="#qm" x="719" y="370"/><use href="#qm" x="728" y="370"/><use href="#qg" x="742" y="370"/><use href="#qy" x="756" y="365"/><use href="#qb" x="751" y="372"/><use href="#qb" x="764" y="374"/><use href="#qy" x="759" y="374"/><use href="#qy" x="647" y="380"/><use href="#qy" x="660" y="376"/><use href="#qy" x="658" y="380"/><use href="#qm" x="640" y="377"/><use href="#ql" x="663" y="380"/><use href="#ql" x="671" y="380"/><use href="#qb" x="681" y="378"/><use href="#qm" x="680" y="384"/><use href="#qm" x="690" y="376"/><use href="#qo" x="703" y="378"/><use href="#qd" x="702" y="382"/><use href="#qg" x="712" y="380"/><use href="#qc" x="720" y="376"/><use href="#qy" x="727" y="380"/><use href="#ql" x="733" y="380"/><use href="#qy" x="735" y="382"/><use href="#qd" x="752" y="380"/><use href="#qm" x="746" y="386"/><use href="#qy" x="749" y="386"/><use href="#qo" x="758" y="388"/><use href="#qc" x="765" y="392"/><use href="#qm" x="641" y="384"/><use href="#qg" x="651" y="386"/><use href="#qb" x="689" y="386"/><use href="#qm" x="656" y="393"/><use href="#qy" x="677" y="392"/><use href="#qg" x="712" y="394"/><use href="#qg" x="670" y="392"/><use href="#qd" x="640" y="393"/><use href="#qm" x="514" y="322"/><use href="#qg" x="460" y="337"/><use href="#qg" x="470" y="348"/><use href="#qm" x="473" y="357"/><use href="#qm" x="478" y="361"/><use href="#qm" x="467" y="369"/><use href="#qm" x="482" y="367"/><use href="#qm" x="464" y="378"/><use href="#qy" x="492" y="372"/><use href="#qd" x="495" y="376"/><use href="#qm" x="497" y="369"/><use href="#qo" x="504" y="381"/><use href="#qy" x="460" y="383"/><use href="#qm" x="498" y="386"/><use href="#qy" x="501" y="353"/><use href="#qg" x="510" y="349"/><use href="#qy" x="518" y="349"/><use href="#qm" x="522" y="344"/><use href="#qo" x="516" y="361"/><use href="#qk" x="520" y="359"/><use href="#qc" x="508" y="365"/><use href="#qg" x="512" y="367"/><use href="#qm" x="516" y="365"/><use href="#qb" x="524" y="366"/><use href="#qg" x="524" y="376"/><use href="#qy" x="521" y="382"/><use href="#qm" x="516" y="386"/><use href="#qm" x="406" y="309"/><use href="#qg" x="402" y="318"/><use href="#qy" x="406" y="320"/><use href="#qm" x="416" y="320"/><use href="#qm" x="424" y="323"/><use href="#qm" x="406" y="330"/><use href="#qm" x="416" y="334"/><use href="#qm" x="427" y="331"/><use href="#qb" x="431" y="340"/><use href="#qy" x="429" y="344"/><use href="#qy" x="439" y="340"/><use href="#qd" x="448" y="341"/><use href="#qg" x="456" y="337"/><use href="#qy" x="465" y="336"/><use href="#qm" x="474" y="338"/><use href="#qm" x="443" y="331"/><use href="#qm" x="450" y="325"/><use href="#qm" x="475" y="309"/><use href="#qm" x="471" y="325"/><use href="#qm" x="486" y="313"/><use href="#qm" x="477" y="318"/><use href="#qg" x="481" y="323"/><use href="#qb" x="484" y="326"/><use href="#qm" x="497" y="313"/><use href="#qg" x="502" y="313"/><use href="#qy" x="493" y="323"/><use href="#qb" x="501" y="327"/><use href="#qm" x="514" y="315"/><use href="#qy" x="519" y="324"/><use href="#qm" x="528" y="320"/><use href="#qy" x="491" y="282"/><use href="#qo" x="501" y="275"/><use href="#qm" x="509" y="277"/><use href="#qk" x="516" y="279"/><use href="#qy" x="499" y="281"/><use href="#qy" x="511" y="281"/><use href="#qy" x="495" y="291"/><use href="#qg" x="505" y="290"/><use href="#qm" x="511" y="291"/><use href="#qm" x="523" y="289"/><use href="#qo" x="499" y="299"/><use href="#qm" x="509" y="305"/><use href="#qg" x="517" y="301"/><use href="#qo" x="525" y="301"/><use href="#qm" x="397" y="350"/><use href="#qm" x="410" y="351"/><use href="#qo" x="414" y="359"/><use href="#qm" x="430" y="358"/><use href="#qm" x="390" y="362"/><use href="#qg" x="387" y="371"/><use href="#qm" x="392" y="372"/><use href="#qg" x="381" y="377"/><use href="#ql" x="402" y="376"/><use href="#qy" x="407" y="373"/><use href="#qy" x="413" y="372"/><use href="#qm" x="414" y="380"/><use href="#qm" x="421" y="370"/><use href="#qm" x="431" y="369"/><use href="#qc" x="440" y="367"/><use href="#qy" x="444" y="367"/><use href="#qm" x="453" y="367"/><use href="#qm" x="427" y="378"/><use href="#qm" x="444" y="380"/><use href="#qy" x="461" y="383"/><use href="#qm" x="468" y="369"/><use href="#qm" x="465" y="379"/><use href="#qm" x="462" y="352"/><use href="#ql" x="462" y="356"/><use href="#qm" x="473" y="356"/><use href="#qm" x="477" y="360"/><use href="#qm" x="483" y="367"/><use href="#qo" x="482" y="376"/><use href="#qy" x="428" y="344"/><use href="#qm" x="384" y="385"/><use href="#qm" x="759" y="251"/><use href="#qm" x="755" y="255"/><use href="#qc" x="769" y="251"/><use href="#qd" x="752" y="260"/><use href="#qg" x="750" y="266"/><use href="#qd" x="757" y="264"/><use href="#qc" x="764" y="268"/><use href="#qo" x="760" y="271"/><use href="#ql" x="770" y="270"/><use href="#qm" x="752" y="272"/><use href="#qm" x="769" y="276"/><use href="#qm" x="781" y="254"/><use href="#qb" x="790" y="256"/><use href="#qo" x="782" y="264"/><use href="#qm" x="788" y="268"/><use href="#qg" x="798" y="261"/><use href="#qb" x="800" y="264"/><use href="#qo" x="797" y="275"/><use href="#qb" x="808" y="276"/><use href="#qy" x="824" y="279"/><use href="#qc" x="814" y="284"/><use href="#qc" x="817" y="284"/><use href="#qm" x="829" y="285"/><use href="#qc" x="782" y="280"/><use href="#ql" x="791" y="281"/><use href="#qm" x="784" y="285"/><use href="#ql" x="794" y="285"/><use href="#qg" x="771" y="286"/><use href="#qo" x="766" y="290"/><use href="#ql" x="759" y="292"/><use href="#qm" x="750" y="287"/><use href="#qg" x="793" y="290"/><use href="#qy" x="820" y="292"/><use href="#qg" x="830" y="292"/><use href="#qm" x="838" y="295"/><use href="#qm" x="750" y="298"/><use href="#qg" x="757" y="299"/><use href="#qy" x="761" y="303"/><use href="#qy" x="790" y="299"/><use href="#qy" x="801" y="299"/><use href="#qg" x="814" y="303"/><use href="#qg" x="831" y="299"/><use href="#qg" x="837" y="299"/><use href="#qm" x="846" y="300"/><use href="#qg" x="851" y="302"/><use href="#qg" x="857" y="302"/><use href="#qb" x="865" y="302"/><use href="#qc" x="866" y="306"/><use href="#qm" x="862" y="309"/><use href="#qg" x="876" y="309"/><use href="#qm" x="855" y="314"/><use href="#qm" x="867" y="315"/><use href="#qm" x="755" y="309"/><use href="#qy" x="770" y="307"/><use href="#qb" x="773" y="308"/><use href="#qm" x="782" y="307"/><use href="#qy" x="789" y="310"/><use href="#qm" x="797" y="309"/><use href="#qo" x="811" y="311"/><use href="#qy" x="830" y="313"/><use href="#qy" x="841" y="310"/><use href="#ql" x="841" y="313"/><use href="#qm" x="825" y="318"/><use href="#qy" x="750" y="316"/><use href="#qy" x="772" y="318"/><use href="#qy" x="780" y="316"/><use href="#qm" x="752" y="326"/><use href="#qm" x="771" y="322"/><use href="#qb" x="779" y="326"/><use href="#qy" x="781" y="317"/><use href="#qm" x="753" y="333"/><use href="#qm" x="760" y="332"/><use href="#qc" x="769" y="331"/><use href="#qc" x="750" y="337"/><use href="#qy" x="781" y="337"/><use href="#qm" x="789" y="328"/><use href="#qm" x="799" y="329"/><use href="#qy" x="795" y="321"/><use href="#qy" x="804" y="320"/><use href="#ql" x="810" y="327"/><use href="#qy" x="819" y="322"/><use href="#qy" x="827" y="322"/><use href="#qy" x="831" y="315"/><use href="#ql" x="842" y="314"/><use href="#qm" x="825" y="317"/><use href="#qm" x="804" y="335"/><use href="#qg" x="814" y="334"/><use href="#qm" x="824" y="332"/><use href="#qm" x="824" y="338"/><use href="#qm" x="845" y="323"/><use href="#qg" x="838" y="336"/><use href="#qm" x="848" y="334"/><use href="#qm" x="834" y="343"/><use href="#qm" x="855" y="315"/><use href="#qm" x="868" y="315"/><use href="#qg" x="876" y="312"/><use href="#qg" x="861" y="320"/><use href="#qm" x="876" y="326"/><use href="#qy" x="857" y="331"/><use href="#qc" x="871" y="331"/><use href="#qo" x="858" y="342"/><use href="#qm" x="867" y="342"/><use href="#qo" x="862" y="352"/><use href="#qm" x="853" y="356"/><use href="#ql" x="862" y="357"/><use href="#qo" x="848" y="365"/><use href="#qm" x="848" y="372"/><use href="#qy" x="838" y="376"/><use href="#ql" x="841" y="376"/><use href="#qm" x="839" y="383"/><use href="#qm" x="827" y="386"/><use href="#qb" x="814" y="375"/><use href="#qo" x="824" y="377"/><use href="#ql" x="812" y="345"/><use href="#qy" x="807" y="352"/><use href="#qm" x="810" y="359"/><use href="#ql" x="811" y="364"/><use href="#qm" x="790" y="366"/><use href="#qd" x="804" y="366"/><use href="#qm" x="800" y="368"/><use href="#qm" x="800" y="375"/><use href="#qy" x="791" y="375"/><use href="#qm" x="781" y="378"/><use href="#qm" x="777" y="389"/><use href="#qm" x="752" y="345"/><use href="#qg" x="772" y="343"/><use href="#qm" x="769" y="345"/><use href="#qm" x="772" y="352"/><use href="#qm" x="783" y="352"/><use href="#qm" x="757" y="355"/><use href="#qk" x="750" y="357"/><use href="#qy" x="780" y="361"/><use href="#qg" x="761" y="362"/><use href="#qg" x="769" y="362"/><use href="#qy" x="757" y="365"/><use href="#qb" x="750" y="371"/><use href="#qb" x="764" y="371"/><use href="#qc" x="770" y="370"/><use href="#qy" x="759" y="374"/><use href="#qd" x="753" y="379"/><use href="#qd" x="758" y="379"/><use href="#qm" x="766" y="386"/><use href="#qo" x="758" y="389"/><use href="#qy" x="750" y="386"/><use href="#qm" x="385" y="385"/><use href="#qm" x="374" y="390"/><use href="#qy" x="393" y="391"/><use href="#qm" x="400" y="398"/><use href="#qm" x="413" y="382"/><use href="#qm" x="426" y="382"/><use href="#ql" x="401" y="382"/><use href="#qg" x="381" y="382"/><use href="#qm" x="444" y="382"/><use href="#qm" x="469" y="382"/><use href="#qy" x="461" y="385"/><use href="#ql" x="446" y="390"/><use href="#qd" x="436" y="391"/><use href="#qm" x="422" y="397"/><use href="#qm" x="435" y="399"/><use href="#qg" x="448" y="402"/><use href="#qm" x="455" y="398"/><use href="#qb" x="468" y="406"/><use href="#qm" x="475" y="391"/><use href="#qm" x="367" y="400"/><use href="#qm" x="360" y="405"/><use href="#qm" x="368" y="408"/><use href="#ql" x="339" y="413"/><use href="#qb" x="353" y="411"/><use href="#qm" x="407" y="409"/><use href="#qg" x="418" y="409"/><use href="#qm" x="422" y="406"/><use href="#qb" x="429" y="413"/><use href="#ql" x="446" y="412"/><use href="#qc" x="456" y="412"/><use href="#qk" x="370" y="417"/><use href="#qm" x="383" y="416"/><use href="#qm" x="381" y="421"/><use href="#qy" x="346" y="420"/><use href="#qk" x="426" y="418"/><use href="#qm" x="432" y="419"/><use href="#qd" x="442" y="417"/><use href="#qy" x="460" y="421"/><use href="#qm" x="476" y="425"/><use href="#qm" x="338" y="428"/><use href="#qd" x="347" y="432"/><use href="#qg" x="367" y="427"/><use href="#qm" x="376" y="430"/><use href="#qb" x="364" y="433"/><use href="#qy" x="382" y="432"/><use href="#qy" x="389" y="428"/><use href="#qc" x="398" y="423"/><use href="#qg" x="400" y="428"/><use href="#qy" x="408" y="424"/><use href="#qm" x="413" y="430"/><use href="#qm" x="419" y="429"/><use href="#qm" x="429" y="429"/><use href="#qy" x="449" y="426"/><use href="#qk" x="463" y="430"/><use href="#qg" x="414" y="436"/><use href="#qm" x="430" y="438"/><use href="#ql" x="449" y="435"/><use href="#qy" x="474" y="438"/><use href="#qm" x="460" y="439"/><use href="#qm" x="338" y="442"/><use href="#qg" x="353" y="440"/><use href="#qy" x="370" y="436"/><use href="#qy" x="361" y="445"/><use href="#qk" x="370" y="445"/><use href="#qb" x="370" y="450"/><use href="#qm" x="322" y="449"/><use href="#qb" x="331" y="450"/><use href="#qm" x="389" y="450"/><use href="#qm" x="400" y="451"/><use href="#qg" x="407" y="445"/><use href="#qo" x="420" y="446"/><use href="#qd" x="437" y="446"/><use href="#qy" x="440" y="442"/><use href="#qy" x="451" y="443"/><use href="#ql" x="464" y="448"/><use href="#qm" x="476" y="447"/><use href="#qm" x="451" y="454"/><use href="#qg" x="440" y="458"/><use href="#qb" x="413" y="456"/><use href="#qy" x="468" y="455"/><use href="#qm" x="297" y="459"/><use href="#qm" x="308" y="462"/><use href="#qd" x="336" y="461"/><use href="#qm" x="352" y="459"/><use href="#qb" x="350" y="463"/><use href="#qm" x="343" y="469"/><use href="#qy" x="389" y="461"/><use href="#qd" x="401" y="461"/><use href="#qm" x="376" y="466"/><use href="#qm" x="455" y="459"/><use href="#qm" x="466" y="463"/><use href="#ql" x="432" y="467"/><use href="#qm" x="441" y="465"/><use href="#qm" x="419" y="471"/><use href="#qb" x="407" y="473"/><use href="#qm" x="382" y="472"/><use href="#ql" x="365" y="474"/><use href="#qd" x="361" y="478"/><use href="#qm" x="399" y="477"/><use href="#qm" x="449" y="475"/><use href="#qm" x="457" y="472"/><use href="#qk" x="466" y="468"/><use href="#ql" x="302" y="474"/><use href="#qy" x="302" y="479"/><use href="#qm" x="311" y="478"/><use href="#qo" x="329" y="478"/><use href="#qb" x="430" y="477"/><use href="#qy" x="303" y="480"/><use href="#qm" x="311" y="479"/><use href="#qo" x="330" y="479"/><use href="#qd" x="360" y="480"/><use href="#qm" x="371" y="480"/><use href="#qy" x="377" y="480"/><use href="#qm" x="391" y="480"/><use href="#qg" x="317" y="487"/><use href="#qm" x="320" y="487"/><use href="#qm" x="329" y="489"/><use href="#qo" x="330" y="491"/><use href="#qm" x="321" y="496"/><use href="#qo" x="333" y="496"/><use href="#qg" x="340" y="498"/><use href="#qm" x="344" y="495"/><use href="#qm" x="354" y="496"/><use href="#qy" x="358" y="491"/><use href="#qm" x="380" y="487"/><use href="#qm" x="371" y="495"/><use href="#ql" x="381" y="497"/><use href="#qm" x="390" y="493"/><use href="#qg" x="358" y="501"/><use href="#qg" x="367" y="507"/><use href="#qm" x="388" y="503"/><use href="#qy" x="386" y="508"/><use href="#qc" x="289" y="502"/><use href="#qm" x="296" y="501"/><use href="#qb" x="298" y="505"/><use href="#qc" x="308" y="499"/><use href="#qm" x="309" y="504"/><use href="#qm" x="281" y="508"/><use href="#qm" x="290" y="507"/><use href="#qy" x="316" y="508"/><use href="#qg" x="325" y="510"/><use href="#qm" x="328" y="507"/><use href="#qm" x="342" y="511"/><use href="#qb" x="283" y="518"/><use href="#ql" x="288" y="517"/><use href="#qm" x="293" y="516"/><use href="#qk" x="314" y="518"/><use href="#qm" x="308" y="516"/><use href="#qb" x="361" y="514"/><use href="#qc" x="371" y="511"/><use href="#qm" x="366" y="508"/><use href="#qd" x="377" y="514"/><use href="#qm" x="276" y="521"/><use href="#qm" x="284" y="524"/><use href="#qm" x="294" y="525"/><use href="#qm" x="305" y="521"/><use href="#qm" x="315" y="524"/><use href="#qy" x="327" y="527"/><use href="#qm" x="329" y="523"/><use href="#qm" x="354" y="523"/><use href="#qy" x="371" y="522"/><use href="#qm" x="369" y="526"/><use href="#qm" x="256" y="529"/><use href="#qm" x="267" y="527"/><use href="#qd" x="254" y="534"/><use href="#qm" x="384" y="529"/><use href="#qm" x="391" y="532"/><use href="#ql" x="316" y="528"/><use href="#qc" x="303" y="532"/><use href="#qb" x="302" y="536"/><use href="#qm" x="294" y="536"/><use href="#qm" x="314" y="538"/><use href="#qm" x="325" y="538"/><use href="#qm" x="331" y="535"/><use href="#qm" x="340" y="536"/><use href="#qb" x="354" y="530"/><use href="#qm" x="361" y="533"/><use href="#qd" x="348" y="537"/><use href="#qy" x="304" y="546"/><use href="#qm" x="312" y="548"/><use href="#qd" x="360" y="545"/><use href="#qy" x="380" y="545"/><use href="#qm" x="385" y="536"/><use href="#qg" x="372" y="550"/><use href="#qy" x="241" y="549"/><use href="#qb" x="257" y="553"/><use href="#qm" x="267" y="559"/><use href="#qm" x="276" y="557"/><use href="#qc" x="289" y="560"/><use href="#qd" x="298" y="558"/><use href="#ql" x="312" y="554"/><use href="#ql" x="319" y="554"/><use href="#qg" x="330" y="555"/><use href="#qm" x="336" y="553"/><use href="#qm" x="353" y="552"/><use href="#qm" x="389" y="554"/><use href="#qb" x="365" y="560"/><use href="#qm" x="375" y="560"/><use href="#qk" x="258" y="562"/><use href="#qy" x="276" y="568"/><use href="#qm" x="282" y="566"/><use href="#qd" x="299" y="563"/><use href="#qy" x="327" y="564"/><use href="#qd" x="342" y="564"/><use href="#qm" x="353" y="567"/><use href="#qm" x="361" y="568"/><use href="#qm" x="376" y="568"/><use href="#qm" x="390" y="480"/><use href="#qm" x="396" y="478"/><use href="#qm" x="406" y="477"/><use href="#qb" x="411" y="477"/><use href="#qm" x="411" y="485"/><use href="#qd" x="417" y="481"/><use href="#qk" x="419" y="488"/><use href="#qy" x="412" y="494"/><use href="#qg" x="429" y="481"/><use href="#qy" x="438" y="482"/><use href="#qm" x="425" y="498"/><use href="#qm" x="433" y="496"/><use href="#qm" x="390" y="493"/><use href="#qm" x="390" y="503"/><use href="#qc" x="408" y="504"/><use href="#qg" x="443" y="489"/><use href="#qg" x="445" y="499"/><use href="#qm" x="448" y="477"/><use href="#qm" x="457" y="477"/><use href="#qg" x="466" y="483"/><use href="#qm" x="463" y="490"/><use href="#qk" x="458" y="498"/><use href="#qm" x="465" y="508"/><use href="#ql" x="475" y="493"/><use href="#qb" x="476" y="500"/><use href="#qm" x="480" y="487"/><use href="#qg" x="480" y="477"/><use href="#qm" x="447" y="513"/><use href="#qm" x="443" y="522"/><use href="#qg" x="474" y="523"/><use href="#qg" x="487" y="523"/><use href="#qm" x="406" y="521"/><use href="#qm" x="416" y="517"/><use href="#qy" x="419" y="524"/><use href="#qd" x="401" y="529"/><use href="#qm" x="390" y="531"/><use href="#qm" x="421" y="532"/><use href="#qm" x="408" y="537"/><use href="#qm" x="406" y="548"/><use href="#qy" x="404" y="557"/><use href="#qm" x="415" y="555"/><use href="#qm" x="390" y="554"/><use href="#qm" x="450" y="538"/><use href="#qb" x="462" y="534"/><use href="#qm" x="459" y="536"/><use href="#qy" x="461" y="551"/><use href="#qm" x="466" y="553"/><use href="#qm" x="448" y="556"/><use href="#qy" x="452" y="561"/><use href="#qm" x="462" y="560"/><use href="#qy" x="468" y="564"/><use href="#ql" x="434" y="566"/><use href="#qm" x="416" y="572"/><use href="#qm" x="480" y="456"/><use href="#qy" x="484" y="459"/><use href="#qy" x="493" y="458"/><use href="#ql" x="488" y="449"/><use href="#qc" x="497" y="451"/><use href="#qm" x="506" y="444"/><use href="#qy" x="507" y="454"/><use href="#qg" x="516" y="454"/><use href="#qg" x="522" y="457"/><use href="#qm" x="508" y="461"/><use href="#qg" x="492" y="466"/><use href="#qb" x="507" y="469"/><use href="#qm" x="528" y="468"/><use href="#qk" x="552" y="462"/><use href="#qm" x="530" y="447"/><use href="#qm" x="540" y="449"/><use href="#qm" x="553" y="446"/><use href="#qm" x="554" y="453"/><use href="#qy" x="563" y="454"/><use href="#qm" x="566" y="457"/><use href="#qg" x="571" y="449"/><use href="#qg" x="578" y="446"/><use href="#qy" x="581" y="441"/><use href="#qm" x="562" y="444"/><use href="#qg" x="480" y="473"/><use href="#qg" x="483" y="473"/><use href="#qy" x="496" y="476"/><use href="#qm" x="480" y="486"/><use href="#qm" x="496" y="484"/><use href="#qg" x="502" y="484"/><use href="#qm" x="519" y="481"/><use href="#qc" x="530" y="481"/><use href="#qk" x="490" y="491"/><use href="#qo" x="496" y="490"/><use href="#ql" x="502" y="495"/><use href="#qd" x="506" y="492"/><use href="#qb" x="480" y="500"/><use href="#qy" x="499" y="504"/><use href="#qm" x="502" y="507"/><use href="#qm" x="508" y="510"/><use href="#qy" x="515" y="504"/><use href="#qm" x="522" y="503"/><use href="#qm" x="550" y="501"/><use href="#qy" x="519" y="513"/><use href="#qy" x="534" y="514"/><use href="#qg" x="543" y="512"/><use href="#qy" x="557" y="511"/><use href="#qg" x="558" y="515"/><use href="#qc" x="503" y="519"/><use href="#qg" x="480" y="522"/><use href="#qg" x="487" y="522"/><use href="#qy" x="519" y="520"/><use href="#qg" x="527" y="521"/><use href="#qg" x="537" y="522"/><use href="#qg" x="546" y="522"/><use href="#qm" x="551" y="525"/><use href="#qb" x="557" y="530"/><use href="#qb" x="557" y="538"/><use href="#qm" x="491" y="533"/><use href="#qm" x="513" y="536"/><use href="#qy" x="511" y="541"/><use href="#qm" x="531" y="546"/><use href="#qg" x="501" y="554"/><use href="#qm" x="496" y="565"/><use href="#qg" x="495" y="568"/><use href="#qk" x="489" y="572"/><use href="#qm" x="521" y="565"/><use href="#qk" x="524" y="563"/><use href="#qk" x="618" y="452"/><use href="#qb" x="625" y="446"/><use href="#qd" x="624" y="454"/><use href="#qm" x="632" y="439"/><use href="#qm" x="638" y="447"/><use href="#qc" x="642" y="443"/><use href="#qy" x="646" y="437"/><use href="#qy" x="647" y="449"/><use href="#qy" x="648" y="456"/><use href="#qo" x="644" y="462"/><use href="#qy" x="658" y="439"/><use href="#qm" x="670" y="441"/><use href="#qb" x="606" y="463"/><use href="#qm" x="623" y="460"/><use href="#ql" x="619" y="467"/><use href="#qk" x="600" y="470"/><use href="#qb" x="612" y="472"/><use href="#qm" x="629" y="471"/><use href="#qm" x="592" y="479"/><use href="#qm" x="601" y="481"/><use href="#qm" x="607" y="482"/><use href="#qm" x="601" y="487"/><use href="#qm" x="645" y="479"/><use href="#qm" x="653" y="479"/><use href="#qm" x="585" y="496"/><use href="#qb" x="586" y="500"/><use href="#ql" x="597" y="499"/><use href="#qm" x="604" y="498"/><use href="#qm" x="612" y="495"/><use href="#qm" x="605" y="503"/><use href="#qm" x="611" y="506"/><use href="#qk" x="614" y="508"/><use href="#qo" x="587" y="521"/><use href="#qg" x="625" y="521"/><use href="#qm" x="686" y="461"/><use href="#qb" x="690" y="454"/><use href="#qb" x="695" y="464"/><use href="#qm" x="691" y="471"/><use href="#qd" x="694" y="480"/><use href="#qd" x="697" y="489"/><use href="#qm" x="700" y="445"/><use href="#qm" x="710" y="438"/><use href="#qm" x="719" y="437"/><use href="#qb" x="716" y="467"/><use href="#qg" x="725" y="465"/><use href="#qm" x="732" y="465"/><use href="#qm" x="753" y="454"/><use href="#qm" x="638" y="501"/><use href="#qm" x="645" y="500"/><use href="#qm" x="651" y="501"/><use href="#qm" x="658" y="500"/><use href="#qg" x="670" y="501"/><use href="#qm" x="677" y="505"/><use href="#qm" x="686" y="508"/><use href="#qd" x="683" y="516"/><use href="#qm" x="681" y="523"/><use href="#qb" x="679" y="528"/><use href="#qy" x="678" y="534"/><use href="#qb" x="678" y="542"/><use href="#qg" x="680" y="548"/><use href="#qm" x="678" y="551"/><use href="#qg" x="745" y="503"/><use href="#qm" x="712" y="518"/><use href="#qm" x="721" y="516"/><use href="#qm" x="726" y="520"/><use href="#qg" x="732" y="516"/><use href="#qm" x="698" y="523"/><use href="#qg" x="702" y="525"/><use href="#qk" x="659" y="540"/><use href="#qm" x="662" y="540"/><use href="#ql" x="637" y="545"/><use href="#qb" x="639" y="548"/><use href="#qb" x="646" y="545"/><use href="#qg" x="636" y="557"/><use href="#qm" x="633" y="564"/><use href="#qm" x="642" y="569"/><use href="#qb" x="661" y="569"/><use href="#qm" x="667" y="565"/><use href="#qm" x="687" y="558"/><use href="#qg" x="691" y="558"/><use href="#qd" x="699" y="560"/><use href="#qy" x="709" y="565"/><use href="#qm" x="718" y="562"/><use href="#qm" x="725" y="572"/><use href="#qm" x="737" y="554"/><use href="#qm" x="744" y="570"/><use href="#qo" x="757" y="389"/><use href="#qc" x="763" y="392"/><use href="#qm" x="777" y="390"/><use href="#qm" x="760" y="385"/><use href="#qm" x="782" y="383"/><use href="#qm" x="826" y="387"/><use href="#qm" x="839" y="385"/><use href="#qm" x="842" y="392"/><use href="#qm" x="800" y="394"/><use href="#qm" x="792" y="402"/><use href="#qg" x="803" y="402"/><use href="#qm" x="814" y="394"/><use href="#qm" x="816" y="400"/><use href="#qm" x="814" y="408"/><use href="#qm" x="818" y="411"/><use href="#qg" x="826" y="407"/><use href="#qy" x="826" y="411"/><use href="#qo" x="830" y="416"/><use href="#qy" x="848" y="404"/><use href="#qd" x="848" y="406"/><use href="#qm" x="843" y="413"/><use href="#qb" x="839" y="418"/><use href="#ql" x="835" y="424"/><use href="#qg" x="841" y="425"/><use href="#qm" x="853" y="421"/><use href="#qo" x="769" y="404"/><use href="#ql" x="768" y="414"/><use href="#qc" x="766" y="418"/><use href="#qk" x="766" y="423"/><use href="#qm" x="771" y="422"/><use href="#qm" x="778" y="431"/><use href="#qm" x="791" y="429"/><use href="#qm" x="766" y="436"/><use href="#qm" x="791" y="441"/><use href="#qm" x="756" y="454"/><use href="#qm" x="786" y="452"/><use href="#qm" x="780" y="461"/><use href="#qy" x="847" y="430"/><use href="#qm" x="846" y="435"/><use href="#qy" x="858" y="438"/><use href="#qg" x="868" y="438"/><use href="#qm" x="870" y="431"/><use href="#qy" x="874" y="438"/><use href="#qg" x="880" y="438"/><use href="#qg" x="886" y="443"/><use href="#qm" x="889" y="433"/><use href="#qm" x="894" y="432"/><use href="#qm" x="885" y="451"/><use href="#qm" x="894" y="450"/><use href="#qm" x="861" y="444"/><use href="#ql" x="860" y="449"/><use href="#qg" x="859" y="454"/><use href="#qm" x="913" y="432"/><use href="#qd" x="1013" y="442"/><use href="#qm" x="1026" y="457"/><use href="#qm" x="855" y="463"/><use href="#qd" x="890" y="466"/><use href="#qm" x="920" y="458"/><use href="#qy" x="917" y="466"/><use href="#qb" x="914" y="474"/><use href="#qy" x="915" y="474"/><use href="#qm" x="806" y="471"/><use href="#qm" x="831" y="472"/><use href="#qg" x="844" y="474"/><use href="#qm" x="853" y="472"/><use href="#qg" x="858" y="475"/><use href="#qm" x="867" y="471"/><use href="#qm" x="873" y="475"/><use href="#qy" x="823" y="478"/><use href="#qg" x="832" y="482"/><use href="#qg" x="832" y="490"/><use href="#qm" x="854" y="484"/><use href="#qm" x="801" y="484"/><use href="#qm" x="804" y="481"/><use href="#qm" x="783" y="488"/><use href="#qm" x="792" y="490"/><use href="#qy" x="770" y="495"/><use href="#qm" x="762" y="500"/><use href="#qm" x="776" y="500"/><use href="#qb" x="797" y="498"/><use href="#qm" x="838" y="491"/><use href="#qm" x="834" y="500"/><use href="#qy" x="880" y="491"/><use href="#qm" x="909" y="482"/><use href="#qy" x="907" y="486"/><use href="#qg" x="919" y="483"/><use href="#qm" x="924" y="486"/><use href="#qm" x="899" y="495"/><use href="#qm" x="899" y="502"/><use href="#qg" x="928" y="496"/><use href="#qm" x="937" y="500"/><use href="#qm" x="947" y="497"/><use href="#qb" x="924" y="504"/><use href="#qb" x="968" y="492"/><use href="#qm" x="992" y="486"/><use href="#qb" x="1000" y="481"/><use href="#qm" x="832" y="506"/><use href="#qy" x="837" y="506"/><use href="#qg" x="857" y="501"/><use href="#qm" x="859" y="509"/><use href="#qy" x="834" y="516"/><use href="#qc" x="838" y="515"/><use href="#qm" x="824" y="514"/><use href="#qm" x="801" y="514"/><use href="#qm" x="844" y="513"/><use href="#qm" x="847" y="517"/><use href="#qm" x="883" y="510"/><use href="#qm" x="883" y="514"/><use href="#qd" x="956" y="511"/><use href="#qm" x="966" y="514"/><use href="#qm" x="863" y="522"/><use href="#qm" x="838" y="527"/><use href="#qg" x="836" y="536"/><use href="#qm" x="894" y="529"/><use href="#qm" x="930" y="524"/><use href="#qg" x="943" y="526"/><use href="#qm" x="986" y="524"/><use href="#ql" x="992" y="527"/><use href="#qd" x="1007" y="535"/><use href="#qm" x="1019" y="547"/><use href="#qy" x="898" y="540"/><use href="#qg" x="929" y="540"/><use href="#qb" x="822" y="546"/><use href="#qb" x="833" y="546"/><use href="#qb" x="808" y="553"/><use href="#qm" x="817" y="552"/><use href="#qg" x="801" y="555"/><use href="#qm" x="791" y="559"/><use href="#qy" x="836" y="555"/><use href="#qg" x="870" y="546"/><use href="#qm" x="870" y="555"/><use href="#qm" x="873" y="559"/><use href="#qy" x="913" y="561"/><use href="#qb" x="225" y="575"/><use href="#qm" x="238" y="578"/><use href="#qb" x="257" y="577"/><use href="#qm" x="251" y="584"/><use href="#qm" x="256" y="590"/><use href="#ql" x="266" y="584"/><use href="#qm" x="238" y="589"/><use href="#qk" x="240" y="590"/><use href="#qm" x="252" y="593"/><use href="#qc" x="261" y="595"/><use href="#qm" x="252" y="601"/><use href="#qm" x="272" y="576"/><use href="#qm" x="276" y="573"/><use href="#qk" x="258" y="567"/><use href="#qm" x="266" y="567"/><use href="#qy" x="276" y="569"/><use href="#qm" x="284" y="570"/><use href="#qm" x="291" y="571"/><use href="#qm" x="298" y="569"/><use href="#qd" x="302" y="567"/><use href="#qm" x="313" y="567"/><use href="#qm" x="282" y="577"/><use href="#qy" x="241" y="606"/><use href="#qc" x="249" y="606"/><use href="#qm" x="237" y="617"/><use href="#qm" x="240" y="623"/><use href="#qm" x="255" y="625"/><use href="#qm" x="236" y="628"/><use href="#qm" x="247" y="633"/><use href="#qm" x="252" y="637"/><use href="#ql" x="263" y="633"/><use href="#qo" x="225" y="639"/><use href="#qo" x="236" y="642"/><use href="#qo" x="245" y="644"/><use href="#qb" x="256" y="642"/><use href="#qm" x="214" y="646"/><use href="#qm" x="220" y="647"/><use href="#qy" x="248" y="648"/><use href="#qm" x="224" y="652"/><use href="#qy" x="239" y="654"/><use href="#qm" x="229" y="657"/><use href="#qg" x="208" y="655"/><use href="#qm" x="217" y="656"/><use href="#qm" x="231" y="660"/><use href="#qm" x="322" y="567"/><use href="#qm" x="334" y="567"/><use href="#qd" x="342" y="567"/><use href="#qy" x="354" y="569"/><use href="#qm" x="360" y="570"/><use href="#qm" x="372" y="570"/><use href="#qm" x="375" y="565"/><use href="#qm" x="367" y="577"/><use href="#qm" x="387" y="577"/><use href="#qm" x="378" y="580"/><use href="#qy" x="380" y="583"/><use href="#qm" x="381" y="591"/><use href="#qd" x="363" y="594"/><use href="#qm" x="376" y="598"/><use href="#qy" x="374" y="604"/><use href="#qb" x="380" y="600"/><use href="#qm" x="369" y="612"/><use href="#qm" x="407" y="597"/><use href="#qm" x="401" y="605"/><use href="#qc" x="385" y="612"/><use href="#qb" x="399" y="611"/><use href="#qm" x="382" y="621"/><use href="#qd" x="391" y="620"/><use href="#qm" x="402" y="621"/><use href="#qm" x="409" y="623"/><use href="#qc" x="381" y="631"/><use href="#qy" x="394" y="632"/><use href="#qk" x="394" y="636"/><use href="#qm" x="375" y="637"/><use href="#qy" x="395" y="644"/><use href="#qm" x="415" y="572"/><use href="#qm" x="415" y="579"/><use href="#qm" x="415" y="584"/><use href="#qm" x="433" y="568"/><use href="#ql" x="434" y="568"/><use href="#qy" x="451" y="565"/><use href="#qy" x="468" y="565"/><use href="#qc" x="443" y="584"/><use href="#qm" x="436" y="588"/><use href="#qy" x="443" y="589"/><use href="#qm" x="472" y="577"/><use href="#qm" x="471" y="586"/><use href="#qm" x="471" y="612"/><use href="#qm" x="465" y="625"/><use href="#qg" x="476" y="622"/><use href="#qm" x="425" y="642"/><use href="#qk" x="428" y="642"/><use href="#qm" x="443" y="634"/><use href="#qm" x="439" y="644"/><use href="#ql" x="451" y="635"/><use href="#qm" x="451" y="637"/><use href="#qb" x="450" y="651"/><use href="#qm" x="457" y="634"/><use href="#qy" x="468" y="635"/><use href="#qm" x="466" y="638"/><use href="#qm" x="469" y="646"/><use href="#qm" x="471" y="653"/><use href="#qm" x="398" y="656"/><use href="#qm" x="415" y="655"/><use href="#qg" x="424" y="653"/><use href="#qm" x="433" y="652"/><use href="#qm" x="441" y="649"/><use href="#qm" x="395" y="668"/><use href="#qm" x="398" y="675"/><use href="#qm" x="405" y="670"/><use href="#qm" x="406" y="676"/><use href="#qm" x="416" y="666"/><use href="#qm" x="423" y="670"/><use href="#qb" x="417" y="675"/><use href="#qm" x="427" y="673"/><use href="#qg" x="433" y="673"/><use href="#qg" x="421" y="685"/><use href="#qm" x="423" y="690"/><use href="#ql" x="429" y="701"/><use href="#qm" x="431" y="709"/><use href="#qg" x="496" y="569"/><use href="#qk" x="490" y="572"/><use href="#qm" x="480" y="577"/><use href="#qm" x="483" y="584"/><use href="#qm" x="520" y="565"/><use href="#qk" x="524" y="565"/><use href="#qm" x="506" y="609"/><use href="#qk" x="482" y="614"/><use href="#qb" x="485" y="621"/><use href="#qm" x="492" y="618"/><use href="#qm" x="500" y="618"/><use href="#qc" x="485" y="627"/><use href="#qy" x="480" y="623"/><use href="#qm" x="512" y="619"/><use href="#qm" x="524" y="616"/><use href="#qm" x="533" y="616"/><use href="#qm" x="542" y="621"/><use href="#qb" x="545" y="618"/><use href="#qm" x="550" y="613"/><use href="#qb" x="553" y="621"/><use href="#qy" x="560" y="618"/><use href="#qy" x="568" y="615"/><use href="#qm" x="561" y="626"/><use href="#qy" x="498" y="632"/><use href="#qm" x="480" y="633"/><use href="#qb" x="499" y="640"/><use href="#qm" x="505" y="639"/><use href="#qm" x="503" y="646"/><use href="#qm" x="480" y="649"/><use href="#qg" x="546" y="640"/><use href="#qm" x="542" y="643"/><use href="#qm" x="543" y="646"/><use href="#qm" x="564" y="665"/><use href="#qy" x="562" y="666"/><use href="#qy" x="535" y="674"/><use href="#qg" x="531" y="690"/><use href="#qy" x="529" y="691"/><use href="#qg" x="603" y="582"/><use href="#qo" x="596" y="594"/><use href="#qm" x="615" y="598"/><use href="#qm" x="632" y="567"/><use href="#qm" x="642" y="570"/><use href="#qb" x="660" y="569"/><use href="#qm" x="667" y="565"/><use href="#qk" x="664" y="612"/><use href="#qm" x="696" y="594"/><use href="#qm" x="695" y="600"/><use href="#qy" x="709" y="565"/><use href="#qm" x="721" y="565"/><use href="#qm" x="723" y="571"/><use href="#qm" x="728" y="580"/><use href="#qm" x="735" y="590"/><use href="#qm" x="740" y="596"/><use href="#qm" x="744" y="570"/><use href="#qm" x="747" y="579"/><use href="#qm" x="752" y="588"/><use href="#qm" x="752" y="593"/><use href="#qy" x="751" y="607"/><use href="#ql" x="754" y="620"/><use href="#qy" x="696" y="620"/><use href="#qm" x="700" y="625"/><use href="#ql" x="704" y="632"/><use href="#qm" x="719" y="618"/><use href="#qg" x="723" y="625"/><use href="#qm" x="682" y="635"/><use href="#qm" x="688" y="653"/><use href="#qm" x="701" y="649"/><use href="#qm" x="712" y="644"/><use href="#qm" x="712" y="655"/><use href="#qk" x="705" y="664"/><use href="#qy" x="717" y="654"/><use href="#qm" x="723" y="649"/><use href="#qm" x="730" y="639"/><use href="#qm" x="737" y="639"/><use href="#qb" x="724" y="660"/><use href="#ql" x="730" y="666"/><use href="#qb" x="733" y="647"/><use href="#qg" x="734" y="654"/><use href="#qm" x="738" y="644"/><use href="#qm" x="744" y="656"/><use href="#qm" x="750" y="658"/><use href="#qy" x="748" y="652"/><use href="#qm" x="757" y="647"/><use href="#qm" x="744" y="668"/><use href="#qk" x="750" y="679"/><use href="#qm" x="744" y="687"/><use href="#qm" x="754" y="686"/><use href="#qb" x="738" y="690"/><use href="#qm" x="742" y="698"/><use href="#qd" x="730" y="701"/><use href="#qy" x="745" y="701"/><use href="#qd" x="755" y="694"/><use href="#ql" x="752" y="708"/><use href="#qd" x="738" y="713"/><use href="#qm" x="745" y="721"/><use href="#qm" x="753" y="719"/><use href="#qm" x="746" y="735"/><use href="#qk" x="752" y="731"/><use href="#qd" x="755" y="735"/><use href="#qm" x="791" y="563"/><use href="#qm" x="790" y="570"/><use href="#qb" x="792" y="577"/><use href="#qg" x="798" y="586"/><use href="#qm" x="803" y="595"/><use href="#qb" x="798" y="597"/><use href="#ql" x="797" y="607"/><use href="#qm" x="796" y="610"/><use href="#qm" x="793" y="616"/><use href="#qm" x="790" y="624"/><use href="#qm" x="780" y="629"/><use href="#qm" x="781" y="638"/><use href="#qm" x="758" y="588"/><use href="#qm" x="758" y="594"/><use href="#qy" x="756" y="607"/><use href="#qm" x="756" y="618"/><use href="#ql" x="757" y="622"/><use href="#qg" x="760" y="625"/><use href="#qm" x="761" y="628"/><use href="#qm" x="762" y="634"/><use href="#qo" x="765" y="637"/><use href="#qm" x="758" y="649"/><use href="#qg" x="765" y="651"/><use href="#qm" x="768" y="670"/><use href="#qm" x="763" y="673"/><use href="#qm" x="758" y="684"/><use href="#qd" x="758" y="694"/><use href="#qm" x="758" y="715"/><use href="#qm" x="765" y="733"/><use href="#qg" x="764" y="736"/><use href="#qk" x="769" y="735"/><use href="#qb" x="881" y="574"/><use href="#qm" x="894" y="572"/><use href="#qm" x="900" y="577"/><use href="#qm" x="900" y="583"/><use href="#qg" x="907" y="570"/><use href="#qm" x="910" y="565"/><use href="#qy" x="914" y="563"/><use href="#qm" x="928" y="574"/><use href="#qg" x="931" y="577"/><use href="#qd" x="941" y="586"/><use href="#qm" x="948" y="584"/><use href="#qb" x="952" y="597"/><use href="#qm" x="952" y="604"/><use href="#qm" x="952" y="609"/><use href="#qm" x="950" y="617"/><use href="#qg" x="957" y="624"/><use href="#qb" x="883" y="591"/><use href="#qg" x="886" y="588"/><use href="#qg" x="874" y="601"/><use href="#qm" x="864" y="606"/><use href="#qm" x="873" y="563"/></svg></div>

<!-- status bar -->
<div class="abs" style="left:0;top:1013px;width:1920px;height:19px;background:#f0f0f0;border-top:1px solid #fafafa"></div>
<div class="abs" style="left:0;top:1014px;width:1920px;height:1px;background:#a0a0a0"></div>
<div class="sb">
<span style="left:1px;top:1015px;width:98px;padding-left:4px">MapsID: 3817</span>
<span style="left:102px;top:1015px;width:77px">png</span>
<span style="left:182px;top:1015px;width:97px">MinZoom: 8</span>
<span style="left:282px;top:1015px;width:97px">MaxZoom: 18</span>
<span style="left:382px;top:1015px;width:97px">TileSize: 256</span>
<span style="left:482px;top:1015px;width:97px">EPSG:3857</span>
<span style="left:582px;top:1015px;width:1336px">Longitude=8.734131, Latitude=46.852678, tile=8/134/90.png</span>
</div>
</body></html>
